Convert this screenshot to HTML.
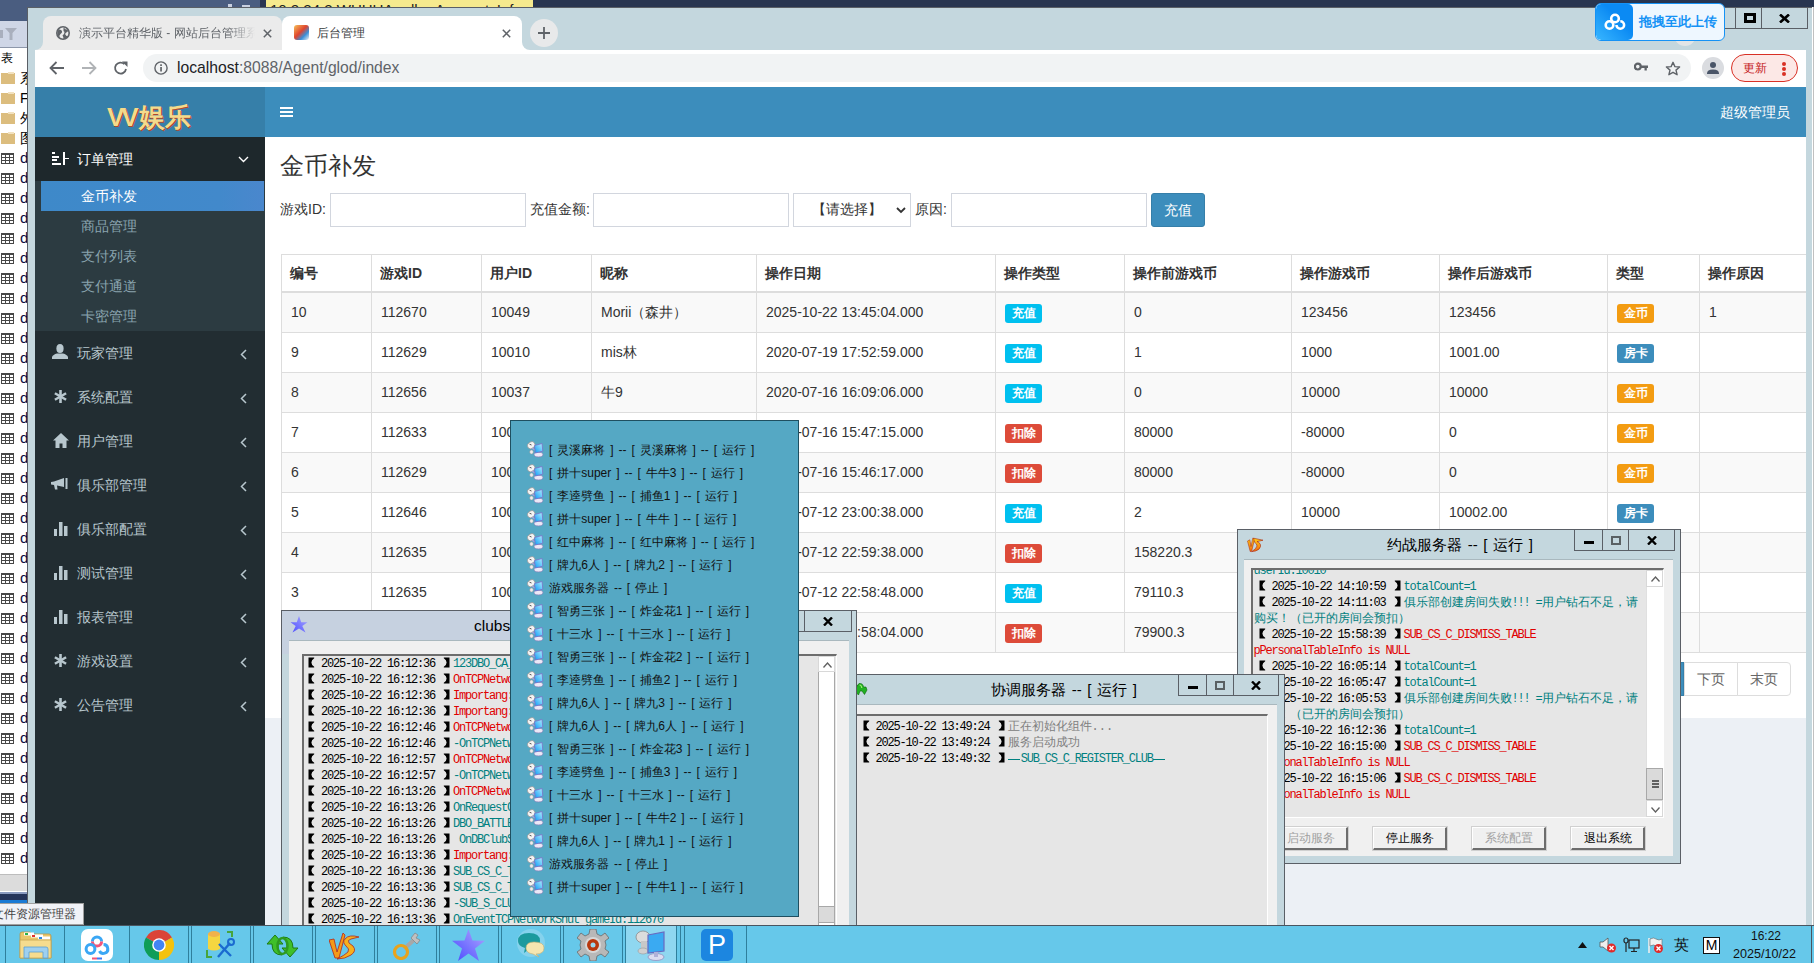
<!DOCTYPE html>
<html><head><meta charset="utf-8">
<style>
*{box-sizing:border-box;margin:0;padding:0}
html,body{width:1814px;height:963px;overflow:hidden;background:#283550;font-family:"Liberation Sans",sans-serif;font-size:14px;color:#333;position:relative}
.a{position:absolute}
.tbl{position:absolute;left:1px;top:4px;width:13px;height:12px;border:1px solid #4a4a4a;border-top-width:2px;background:
 linear-gradient(#4a4a4a,#4a4a4a) 3px 0/1px 100% no-repeat,
 linear-gradient(#4a4a4a,#4a4a4a) 7px 0/1px 100% no-repeat,
 linear-gradient(#4a4a4a,#4a4a4a) 0 2px/100% 1px no-repeat,
 linear-gradient(#4a4a4a,#4a4a4a) 0 5px/100% 1px no-repeat,#fff}
.fold{position:absolute;left:1px;top:5px;width:14px;height:11px;background:#dcb56a;border-radius:1px}
.el{position:absolute;left:20px;top:0px;font-size:15px;color:#000;line-height:20px}
.mi{position:absolute;left:35px;width:230px;height:44px;color:#b8c7ce;font-size:14px}
.mi .t{position:absolute;left:42px;top:12px;line-height:20px}
.mi .ic{position:absolute}
.mi .chev{position:absolute}
.sub{position:absolute;left:41px;width:223px;height:30px;color:#8aa4af;font-size:14px}
.sub .t{position:absolute;left:40px;top:5px;line-height:20px}
.lbl{font-size:14px;line-height:20px;color:#333}
.inp{height:34px;border:1px solid #d2d6de;background:#fff}
.th{font-size:14px;font-weight:bold;line-height:20px;color:#333;white-space:nowrap}
.td{font-size:14px;line-height:20px;color:#333;white-space:nowrap}
.lab{height:19px;width:37px;text-align:center;border-radius:3px;color:#fff;font-size:12px;font-weight:bold;line-height:19px;white-space:nowrap}
.pg{height:34px;border:1px solid #ddd;background:#fff;color:#666;font-size:14px;line-height:32px;text-align:center}
.tb{width:13px;height:11px;border:1px solid #474747;border-top-width:2px;background:linear-gradient(90deg,transparent 3px,#474747 3px,#474747 4px,transparent 4px,transparent 7px,#474747 7px,#474747 8px,transparent 8px),linear-gradient(transparent 2px,#474747 2px,#474747 3px,transparent 3px,transparent 5px,#474747 5px,#474747 6px,transparent 6px),#fff}

.win{box-shadow:inset 0 0 0 1px #5a5f66;background:#c4d7de;overflow:hidden}
.wt{font-size:15px;line-height:20px;color:#000;white-space:nowrap;word-spacing:1.5px}
.tbtn{border:1px solid #5a5f66;background:#c4d7de}
.panel{background:#f0f0f0;border-top:1px solid #a9b8be}
.logbox{background:#e6e6e6;border-top:2px solid #6d6d6d;border-left:2px solid #6d6d6d;border-right:1px solid #fff;border-bottom:1px solid #fff;overflow:hidden}
.ll{position:absolute;white-space:nowrap;font-family:"Liberation Mono",monospace;font-size:12px;line-height:16px;letter-spacing:-1.2px;color:#000}
.ll .bk{display:inline-block;vertical-align:top;fill:#000}
.ll .cj{letter-spacing:0}
.ll .c{color:#008080}
.ll .r{color:#e00000}
.ll .g{color:#808080}
.ll .emd{display:inline-block;width:12px;height:1px;background:#008080;vertical-align:top;margin-top:8px;margin-right:1.2px}
.sb{background:#fff;border-left:1px solid #e0e0e0}
.sbb{background:#fff;border:1px solid #d8d8d8}
.sbt{background:#dadada;border:1px solid #a8a8a8}
.wbtn{width:74px;height:23px;background:#f0f0f0;border-top:1px solid #fff;border-left:1px solid #fff;border-right:2px solid #6d6d6d;border-bottom:2px solid #6d6d6d;font-size:12px;line-height:20px;text-align:center;color:#000;box-shadow:0 0 0 1px #d0d0d0}
.wbtn.dis{color:#a0a0a0}
.pi{position:absolute;height:20px;font-size:12px;line-height:18px;color:#111;word-spacing:1.6px}
</style></head><body>
<!-- desktop bits -->
<div class="a" style="left:0;top:0;width:260px;height:21px;background:#4a5d80"></div>
<div class="a" style="left:260px;top:0;width:6px;height:7px;background:#2a3550"></div>
<div class="a" style="left:266px;top:0;width:267px;height:7px;background:#f6ea8e;overflow:hidden"><div class="a" style="left:4px;top:1px;font-size:15px;line-height:18px;color:#222;white-space:nowrap">10.2.24.3 WUHUA - dbo.AccountsInfo</div></div>
<div class="a" style="left:228px;top:4px;width:4px;height:3px;background:#c8d0e0"></div><div class="a" style="left:242px;top:5px;width:8px;height:2px;background:#c8d0e0"></div>
<div class="a" id="exp" style="left:0;top:21px;width:27px;height:882px;background:#fff;overflow:hidden">
  <div class="a" style="left:0;top:0;width:27px;height:27px;background:#cfd6e6;border-bottom:1px solid #8d97aa"></div><div class="a" style="left:0;top:9px;width:3px;height:8px;background:#a9afbd"></div><svg class="a" style="left:5px;top:7px" width="12" height="13" viewBox="0 0 12 13"><path d="M0 0 H12 L7.5 5 V12 H4.5 V5Z" fill="#a9afbd"/></svg>
</div>

<div class="a" style="left:1px;top:50px;font-size:12px;line-height:16px;color:#000">表</div>
<div class="a" style="left:1px;top:73px;width:14px;height:11px;background:#dcbd7e"></div><div class="a" style="left:8px;top:72px;width:6px;height:2px;background:#f2e2c0"></div><div class="a" style="left:20px;top:70px;font-size:14px;line-height:16px;color:#000">系</div>
<div class="a" style="left:1px;top:93px;width:14px;height:11px;background:#dcbd7e"></div><div class="a" style="left:8px;top:92px;width:6px;height:2px;background:#f2e2c0"></div><div class="a" style="left:20px;top:90px;font-size:14px;line-height:16px;color:#000">F</div>
<div class="a" style="left:1px;top:113px;width:14px;height:11px;background:#dcbd7e"></div><div class="a" style="left:8px;top:112px;width:6px;height:2px;background:#f2e2c0"></div><div class="a" style="left:20px;top:110px;font-size:14px;line-height:16px;color:#000">外</div>
<div class="a" style="left:1px;top:133px;width:14px;height:11px;background:#dcbd7e"></div><div class="a" style="left:8px;top:132px;width:6px;height:2px;background:#f2e2c0"></div><div class="a" style="left:20px;top:130px;font-size:14px;line-height:16px;color:#000">图</div>
<div class="a tb" style="left:1px;top:153px"></div><div class="a" style="left:20px;top:149px;font-size:15px;line-height:18px;color:#0a0a40">d</div>
<div class="a tb" style="left:1px;top:173px"></div><div class="a" style="left:20px;top:169px;font-size:15px;line-height:18px;color:#0a0a40">d</div>
<div class="a tb" style="left:1px;top:193px"></div><div class="a" style="left:20px;top:189px;font-size:15px;line-height:18px;color:#0a0a40">d</div>
<div class="a tb" style="left:1px;top:213px"></div><div class="a" style="left:20px;top:209px;font-size:15px;line-height:18px;color:#0a0a40">d</div>
<div class="a tb" style="left:1px;top:233px"></div><div class="a" style="left:20px;top:229px;font-size:15px;line-height:18px;color:#0a0a40">d</div>
<div class="a tb" style="left:1px;top:253px"></div><div class="a" style="left:20px;top:249px;font-size:15px;line-height:18px;color:#0a0a40">d</div>
<div class="a tb" style="left:1px;top:273px"></div><div class="a" style="left:20px;top:269px;font-size:15px;line-height:18px;color:#0a0a40">d</div>
<div class="a tb" style="left:1px;top:293px"></div><div class="a" style="left:20px;top:289px;font-size:15px;line-height:18px;color:#0a0a40">d</div>
<div class="a tb" style="left:1px;top:313px"></div><div class="a" style="left:20px;top:309px;font-size:15px;line-height:18px;color:#0a0a40">d</div>
<div class="a tb" style="left:1px;top:333px"></div><div class="a" style="left:20px;top:329px;font-size:15px;line-height:18px;color:#0a0a40">d</div>
<div class="a tb" style="left:1px;top:353px"></div><div class="a" style="left:20px;top:349px;font-size:15px;line-height:18px;color:#0a0a40">d</div>
<div class="a tb" style="left:1px;top:373px"></div><div class="a" style="left:20px;top:369px;font-size:15px;line-height:18px;color:#0a0a40">d</div>
<div class="a tb" style="left:1px;top:393px"></div><div class="a" style="left:20px;top:389px;font-size:15px;line-height:18px;color:#0a0a40">d</div>
<div class="a tb" style="left:1px;top:413px"></div><div class="a" style="left:20px;top:409px;font-size:15px;line-height:18px;color:#0a0a40">d</div>
<div class="a tb" style="left:1px;top:433px"></div><div class="a" style="left:20px;top:429px;font-size:15px;line-height:18px;color:#0a0a40">d</div>
<div class="a tb" style="left:1px;top:453px"></div><div class="a" style="left:20px;top:449px;font-size:15px;line-height:18px;color:#0a0a40">d</div>
<div class="a tb" style="left:1px;top:473px"></div><div class="a" style="left:20px;top:469px;font-size:15px;line-height:18px;color:#0a0a40">d</div>
<div class="a tb" style="left:1px;top:493px"></div><div class="a" style="left:20px;top:489px;font-size:15px;line-height:18px;color:#0a0a40">d</div>
<div class="a tb" style="left:1px;top:513px"></div><div class="a" style="left:20px;top:509px;font-size:15px;line-height:18px;color:#0a0a40">d</div>
<div class="a tb" style="left:1px;top:533px"></div><div class="a" style="left:20px;top:529px;font-size:15px;line-height:18px;color:#0a0a40">d</div>
<div class="a tb" style="left:1px;top:553px"></div><div class="a" style="left:20px;top:549px;font-size:15px;line-height:18px;color:#0a0a40">d</div>
<div class="a tb" style="left:1px;top:573px"></div><div class="a" style="left:20px;top:569px;font-size:15px;line-height:18px;color:#0a0a40">d</div>
<div class="a tb" style="left:1px;top:593px"></div><div class="a" style="left:20px;top:589px;font-size:15px;line-height:18px;color:#0a0a40">d</div>
<div class="a tb" style="left:1px;top:613px"></div><div class="a" style="left:20px;top:609px;font-size:15px;line-height:18px;color:#0a0a40">d</div>
<div class="a tb" style="left:1px;top:633px"></div><div class="a" style="left:20px;top:629px;font-size:15px;line-height:18px;color:#0a0a40">d</div>
<div class="a tb" style="left:1px;top:653px"></div><div class="a" style="left:20px;top:649px;font-size:15px;line-height:18px;color:#0a0a40">d</div>
<div class="a tb" style="left:1px;top:673px"></div><div class="a" style="left:20px;top:669px;font-size:15px;line-height:18px;color:#0a0a40">d</div>
<div class="a tb" style="left:1px;top:693px"></div><div class="a" style="left:20px;top:689px;font-size:15px;line-height:18px;color:#0a0a40">d</div>
<div class="a tb" style="left:1px;top:713px"></div><div class="a" style="left:20px;top:709px;font-size:15px;line-height:18px;color:#0a0a40">d</div>
<div class="a tb" style="left:1px;top:733px"></div><div class="a" style="left:20px;top:729px;font-size:15px;line-height:18px;color:#0a0a40">d</div>
<div class="a tb" style="left:1px;top:753px"></div><div class="a" style="left:20px;top:749px;font-size:15px;line-height:18px;color:#0a0a40">d</div>
<div class="a tb" style="left:1px;top:773px"></div><div class="a" style="left:20px;top:769px;font-size:15px;line-height:18px;color:#0a0a40">d</div>
<div class="a tb" style="left:1px;top:793px"></div><div class="a" style="left:20px;top:789px;font-size:15px;line-height:18px;color:#0a0a40">d</div>
<div class="a tb" style="left:1px;top:813px"></div><div class="a" style="left:20px;top:809px;font-size:15px;line-height:18px;color:#0a0a40">d</div>
<div class="a tb" style="left:1px;top:833px"></div><div class="a" style="left:20px;top:829px;font-size:15px;line-height:18px;color:#0a0a40">d</div>
<div class="a tb" style="left:1px;top:853px"></div><div class="a" style="left:20px;top:849px;font-size:15px;line-height:18px;color:#0a0a40">d</div>
<div class="a" style="left:0;top:874px;width:27px;height:17px;background:#dcdcdc;border-top:1px solid #bdbdbd"></div>
<div class="a" style="left:0;top:892px;width:27px;height:2px;background:#8a9bc0"></div>
<div class="a" style="left:0;top:894px;width:27px;height:6px;background:#25355a"></div>
<div class="a" style="left:0;top:900px;width:27px;height:3px;background:#1a7ad4"></div>

<!-- browser frame -->
<div class="a" style="left:27px;top:7px;width:1785px;height:918px;background:#c4d7de;border-left:1px solid #5a5f66;border-top:1px solid #5a5f66"></div><div class="a" style="left:1812px;top:7px;width:1px;height:918px;background:#fff"></div><div class="a" style="left:1813px;top:7px;width:1px;height:918px;background:#c0c0c0"></div>
<div class="a" style="left:35px;top:42px;width:8px;height:8px;background:#ebebeb"></div><div class="a" style="left:28px;top:34px;width:15px;height:16px;background:#c4d7de;border-bottom-right-radius:8px"></div>
<div class="a" style="left:43px;top:16px;width:239px;height:34px;background:#ebebeb;border-radius:8px 8px 0 0"></div>
<div class="a" style="left:282px;top:16px;width:240px;height:36px;background:#fff;border-radius:8px 8px 0 0"></div>
<div class="a" style="left:522px;top:42px;width:8px;height:8px;background:#fff"></div><div class="a" style="left:522px;top:34px;width:16px;height:16px;background:#c4d7de;border-bottom-left-radius:8px"></div>
<div class="a" style="left:35px;top:50px;width:1771px;height:37px;background:#fff"></div>
<div class="a" style="left:143px;top:54px;width:1548px;height:28px;border-radius:14px;background:#f1f3f4"></div>


<!-- browser chrome details -->
<svg class="a" style="left:56px;top:26px" width="14" height="14" viewBox="0 0 14 14"><circle cx="7" cy="7" r="6.2" fill="none" stroke="#5f6368" stroke-width="1.6"/><path d="M2.5 3.5 Q5 3 6 5 Q6.5 7 4.5 8 Q3 9 3.5 11.5 L1.5 9 Q0.8 6 2.5 3.5Z M8 1.5 Q9 4 11 3.5 L12.5 5 Q10.5 6 9 8 Q10 10 12 10.5 Q10 13 7.5 13 Q7.5 10.5 6.5 9.5 Q8.5 8 8.5 6 Q7 5 7.5 2Z" fill="#5f6368"/></svg>
<div class="a" style="left:79px;top:25px;width:176px;height:18px;overflow:hidden;white-space:nowrap;font-size:12px;line-height:16px;color:#5f6368;-webkit-mask-image:linear-gradient(90deg,#000 85%,transparent)">演示平台精华版 - 网站后台管理系统</div>
<svg class="a" style="left:263px;top:29px" width="9" height="9" viewBox="0 0 9 9"><path d="M0.8 0.8 L8.2 8.2 M8.2 0.8 L0.8 8.2" stroke="#5f6368" stroke-width="1.5"/></svg>
<div class="a" style="left:294px;top:25px;width:15px;height:15px;border-radius:3px;background:linear-gradient(135deg,#f6c35a,#e0442e 45%,#3a8fd8 70%,#f2f2f2)"></div>
<div class="a" style="left:317px;top:25px;font-size:12px;line-height:16px;color:#3c4043">后台管理</div>
<svg class="a" style="left:502px;top:29px" width="9" height="9" viewBox="0 0 9 9"><path d="M0.8 0.8 L8.2 8.2 M8.2 0.8 L0.8 8.2" stroke="#5f6368" stroke-width="1.5"/></svg>
<div class="a" style="left:530px;top:19px;width:28px;height:28px;border-radius:50%;background:#e8e9ea"></div>
<svg class="a" style="left:538px;top:27px" width="12" height="12" viewBox="0 0 12 12"><path d="M6 0 V12 M0 6 H12" stroke="#5f6368" stroke-width="1.8"/></svg>
<svg class="a" style="left:49px;top:61px" width="15" height="14" viewBox="0 0 15 14"><path d="M15 7 H2 M7.5 1 L1.5 7 L7.5 13" stroke="#5f6368" stroke-width="1.8" fill="none"/></svg>
<svg class="a" style="left:82px;top:61px" width="15" height="14" viewBox="0 0 15 14"><path d="M0 7 H13 M7.5 1 L13.5 7 L7.5 13" stroke="#b0b3b6" stroke-width="1.8" fill="none"/></svg>
<svg class="a" style="left:113px;top:60px" width="16" height="16" viewBox="0 0 16 16"><path d="M13 9 A5.5 5.5 0 1 1 11.4 4.1" stroke="#5f6368" stroke-width="1.8" fill="none"/><path d="M9 1.5 L14.5 1.5 L14.5 7 Z" fill="#5f6368"/></svg>
<svg class="a" style="left:154px;top:61px" width="14" height="14" viewBox="0 0 14 14"><circle cx="7" cy="7" r="6.1" fill="none" stroke="#5f6368" stroke-width="1.4"/><rect x="6.2" y="6" width="1.7" height="4.5" fill="#5f6368"/><rect x="6.2" y="3.3" width="1.7" height="1.7" fill="#5f6368"/></svg>
<div class="a" style="left:177px;top:58px;font-size:15.7px;line-height:20px;color:#5f6368;white-space:nowrap"><span style="color:#202124">localhost</span>:8088/Agent/glod/index</div>
<svg class="a" style="left:1634px;top:62px" width="14" height="10" viewBox="0 0 14 10"><circle cx="3.8" cy="4.6" r="2.9" fill="none" stroke="#5f6368" stroke-width="2.2"/><path d="M6.5 3.4 H14 V6 H12.8 V8.5 H10.5 V6 H6.5 Z" fill="#5f6368"/></svg>
<svg class="a" style="left:1665px;top:61px" width="16" height="15" viewBox="0 0 16 15"><path d="M8 1.3 L9.9 5.6 L14.6 6 L11 9.1 L12.1 13.7 L8 11.3 L3.9 13.7 L5 9.1 L1.4 6 L6.1 5.6 Z" fill="none" stroke="#5f6368" stroke-width="1.4" stroke-linejoin="round"/></svg>
<div class="a" style="left:1702px;top:57px;width:22px;height:22px;border-radius:50%;background:#dadce0"></div>
<svg class="a" style="left:1706px;top:61px" width="14" height="14" viewBox="0 0 14 14"><circle cx="7" cy="4" r="3" fill="#4a5568"/><path d="M1 12.5 Q1 8.5 7 8.5 Q13 8.5 13 12.5 V13 H1Z" fill="#4a5568"/></svg>
<div class="a" style="left:1731px;top:54px;width:67px;height:28px;border-radius:14px;border:1px solid #d93025;background:#fce8e6"></div>
<div class="a" style="left:1743px;top:60px;font-size:12px;line-height:16px;color:#c5221f">更新</div>
<div class="a" style="left:1782px;top:62px;width:4px;height:4px;border-radius:50%;background:#d93025"></div>
<div class="a" style="left:1782px;top:66px;width:4px;height:4px;border-radius:50%;background:#d93025;top:67px"></div>
<div class="a" style="left:1782px;top:72px;width:4px;height:4px;border-radius:50%;background:#d93025"></div>

<!-- page -->
<div class="a" style="left:35px;top:87px;width:1771px;height:838px;background:#ecf0f5"></div>
<div class="a" style="left:35px;top:87px;width:230px;height:50px;background:#367fa9"></div>
<div class="a" style="left:265px;top:87px;width:1541px;height:50px;background:#3c8dbc"></div>
<div class="a" style="left:35px;top:137px;width:230px;height:788px;background:#222d32"></div>
<div class="a" style="left:265px;top:137px;width:1541px;height:581px;background:#fff"></div>


<!-- logo + header -->
<div class="a" style="left:107px;top:101px;font-size:26px;font-weight:bold;color:#f4da8c;text-shadow:1px 1px 0 #b0482c;line-height:32px;white-space:nowrap"><span style="letter-spacing:-3px">VV</span><span style="margin-left:3px">娱乐</span></div>
<div class="a" style="left:280px;top:107px;width:13px;height:2px;background:#fff"></div>
<div class="a" style="left:280px;top:111px;width:13px;height:2px;background:#fff"></div>
<div class="a" style="left:280px;top:115px;width:13px;height:2px;background:#fff"></div>
<div class="a" style="left:1720px;top:102px;color:#fff;font-size:14px;line-height:20px">超级管理员</div>

<!-- sidebar -->
<div class="a" style="left:35px;top:137px;width:230px;height:44px;background:#1e282c"></div>
<div class="a" style="left:35px;top:181px;width:230px;height:150px;background:#2c3b41"></div>
<div class="a" style="left:41px;top:181px;width:223px;height:30px;background:linear-gradient(90deg,#3e89c9,#4289cb 80%,#4a87cd)"></div>
<div class="mi" style="top:137px;color:#fff"><svg class="ic" style="left:17px;top:15px" width="17" height="13" viewBox="0 0 17 13"><rect x="0" y="0" width="3" height="2" fill="#fff"/><rect x="0" y="4" width="7" height="2" fill="#fff"/><rect x="0" y="7" width="5" height="2" fill="#fff"/><rect x="0" y="11" width="9" height="2" fill="#fff"/><rect x="11" y="0" width="2" height="13" fill="#fff"/><rect x="13" y="6" width="4" height="1" fill="#fff"/></svg><span class="t">订单管理</span>
<svg class="chev" style="left:203px;top:19px" width="11" height="7" viewBox="0 0 11 7"><path d="M1 1 L5.5 5.5 L10 1" stroke="#fff" stroke-width="1.4" fill="none"/></svg></div>
<div class="sub" style="top:181px;color:#fff"><span class="t">金币补发</span></div>
<div class="sub" style="top:211px"><span class="t">商品管理</span></div>
<div class="sub" style="top:241px"><span class="t">支付列表</span></div>
<div class="sub" style="top:271px"><span class="t">支付通道</span></div>
<div class="sub" style="top:301px"><span class="t">卡密管理</span></div>
<div class="mi" style="top:331px"><svg class="ic" style="left:17px;top:13px" width="16" height="15" viewBox="0 0 16 15"><ellipse cx="8" cy="4.5" rx="3.6" ry="4.5" fill="#b8c7ce"/><path d="M0 15 L0 13 Q1 10.5 5 9.5 L11 9.5 Q15 10.5 16 13 L16 15 Z" fill="#b8c7ce"/></svg><span class="t">玩家管理</span><svg class="chev" style="left:205px;top:18px" width="7" height="11" viewBox="0 0 7 11"><path d="M6 1 L1.5 5.5 L6 10" stroke="#b8c7ce" stroke-width="1.5" fill="none"/></svg></div>
<div class="mi" style="top:375px"><svg class="ic" style="left:19px;top:15px" width="13" height="13" viewBox="0 0 13 13"><g stroke="#b8c7ce" stroke-width="2.6"><path d="M6.5 0 V13"/><path d="M0.9 3.25 L12.1 9.75"/><path d="M0.9 9.75 L12.1 3.25"/></g></svg><span class="t">系统配置</span><svg class="chev" style="left:205px;top:18px" width="7" height="11" viewBox="0 0 7 11"><path d="M6 1 L1.5 5.5 L6 10" stroke="#b8c7ce" stroke-width="1.5" fill="none"/></svg></div>
<div class="mi" style="top:419px"><svg class="ic" style="left:18px;top:14px" width="16" height="15" viewBox="0 0 16 15"><path d="M8 0 L16 7.5 L13.5 7.5 L13.5 15 L9.5 15 L9.5 10.5 L6.5 10.5 L6.5 15 L2.5 15 L2.5 7.5 L0 7.5 Z" fill="#b8c7ce"/></svg><span class="t">用户管理</span><svg class="chev" style="left:205px;top:18px" width="7" height="11" viewBox="0 0 7 11"><path d="M6 1 L1.5 5.5 L6 10" stroke="#b8c7ce" stroke-width="1.5" fill="none"/></svg></div>
<div class="mi" style="top:463px"><svg class="ic" style="left:16px;top:15px" width="17" height="12" viewBox="0 0 17 12"><path d="M0 4 L3 3.5 L13 0 L13 9 L6 7.5 L6.5 11.5 L4 11.5 L3 7 L0 6.5 Z" fill="#b8c7ce"/><rect x="14.5" y="0" width="2" height="11" fill="#b8c7ce"/></svg><span class="t">俱乐部管理</span><svg class="chev" style="left:205px;top:18px" width="7" height="11" viewBox="0 0 7 11"><path d="M6 1 L1.5 5.5 L6 10" stroke="#b8c7ce" stroke-width="1.5" fill="none"/></svg></div>
<div class="mi" style="top:507px"><svg class="ic" style="left:19px;top:15px" width="14" height="14" viewBox="0 0 14 14"><rect x="0" y="7" width="3" height="7" fill="#b8c7ce"/><rect x="5" y="0" width="3.5" height="14" fill="#b8c7ce"/><rect x="10" y="4" width="3.5" height="10" fill="#b8c7ce"/></svg><span class="t">俱乐部配置</span><svg class="chev" style="left:205px;top:18px" width="7" height="11" viewBox="0 0 7 11"><path d="M6 1 L1.5 5.5 L6 10" stroke="#b8c7ce" stroke-width="1.5" fill="none"/></svg></div>
<div class="mi" style="top:551px"><svg class="ic" style="left:19px;top:15px" width="14" height="14" viewBox="0 0 14 14"><rect x="0" y="7" width="3" height="7" fill="#b8c7ce"/><rect x="5" y="0" width="3.5" height="14" fill="#b8c7ce"/><rect x="10" y="4" width="3.5" height="10" fill="#b8c7ce"/></svg><span class="t">测试管理</span><svg class="chev" style="left:205px;top:18px" width="7" height="11" viewBox="0 0 7 11"><path d="M6 1 L1.5 5.5 L6 10" stroke="#b8c7ce" stroke-width="1.5" fill="none"/></svg></div>
<div class="mi" style="top:595px"><svg class="ic" style="left:19px;top:15px" width="14" height="14" viewBox="0 0 14 14"><rect x="0" y="7" width="3" height="7" fill="#b8c7ce"/><rect x="5" y="0" width="3.5" height="14" fill="#b8c7ce"/><rect x="10" y="4" width="3.5" height="10" fill="#b8c7ce"/></svg><span class="t">报表管理</span><svg class="chev" style="left:205px;top:18px" width="7" height="11" viewBox="0 0 7 11"><path d="M6 1 L1.5 5.5 L6 10" stroke="#b8c7ce" stroke-width="1.5" fill="none"/></svg></div>
<div class="mi" style="top:639px"><svg class="ic" style="left:19px;top:15px" width="13" height="13" viewBox="0 0 13 13"><g stroke="#b8c7ce" stroke-width="2.6"><path d="M6.5 0 V13"/><path d="M0.9 3.25 L12.1 9.75"/><path d="M0.9 9.75 L12.1 3.25"/></g></svg><span class="t">游戏设置</span><svg class="chev" style="left:205px;top:18px" width="7" height="11" viewBox="0 0 7 11"><path d="M6 1 L1.5 5.5 L6 10" stroke="#b8c7ce" stroke-width="1.5" fill="none"/></svg></div>
<div class="mi" style="top:683px"><svg class="ic" style="left:19px;top:15px" width="13" height="13" viewBox="0 0 13 13"><g stroke="#b8c7ce" stroke-width="2.6"><path d="M6.5 0 V13"/><path d="M0.9 3.25 L12.1 9.75"/><path d="M0.9 9.75 L12.1 3.25"/></g></svg><span class="t">公告管理</span><svg class="chev" style="left:205px;top:18px" width="7" height="11" viewBox="0 0 7 11"><path d="M6 1 L1.5 5.5 L6 10" stroke="#b8c7ce" stroke-width="1.5" fill="none"/></svg></div>

<!-- content -->
<div class="a" style="left:280px;top:151px;font-size:24px;line-height:30px;color:#333">金币补发</div>
<div class="a lbl" style="left:280px;top:199px">游戏ID:</div>
<div class="a inp" style="left:330px;top:193px;width:196px"></div>
<div class="a lbl" style="left:530px;top:199px">充值金额:</div>
<div class="a inp" style="left:593px;top:193px;width:196px"></div>
<div class="a inp" style="left:793px;top:193px;width:118px"></div>
<div class="a" style="left:812px;top:199px;font-size:14px;line-height:20px;color:#333">【请选择】</div>
<svg class="a" style="left:896px;top:207px" width="10" height="7" viewBox="0 0 10 7"><path d="M1 1 L5 5 L9 1" stroke="#333" stroke-width="1.8" fill="none"/></svg>
<div class="a lbl" style="left:915px;top:199px">原因:</div>
<div class="a inp" style="left:951px;top:193px;width:196px"></div>
<div class="a" style="left:1151px;top:193px;width:54px;height:34px;background:#3c8dbc;border:1px solid #367fa9;border-radius:3px;color:#fff;font-size:14px;line-height:32px;text-align:center">充值</div>
<div class="a" style="left:281px;top:292px;width:1525px;height:40px;background:#f9f9f9"></div>
<div class="a" style="left:281px;top:372px;width:1525px;height:40px;background:#f9f9f9"></div>
<div class="a" style="left:281px;top:452px;width:1525px;height:40px;background:#f9f9f9"></div>
<div class="a" style="left:281px;top:532px;width:1525px;height:40px;background:#f9f9f9"></div>
<div class="a" style="left:281px;top:612px;width:1525px;height:40px;background:#f9f9f9"></div>
<div class="a" style="left:281px;top:254px;width:1525px;height:1px;background:#ddd"></div>
<div class="a" style="left:281px;top:291px;width:1525px;height:2px;background:#ddd"></div>
<div class="a" style="left:281px;top:332px;width:1525px;height:1px;background:#ddd"></div>
<div class="a" style="left:281px;top:372px;width:1525px;height:1px;background:#ddd"></div>
<div class="a" style="left:281px;top:412px;width:1525px;height:1px;background:#ddd"></div>
<div class="a" style="left:281px;top:452px;width:1525px;height:1px;background:#ddd"></div>
<div class="a" style="left:281px;top:492px;width:1525px;height:1px;background:#ddd"></div>
<div class="a" style="left:281px;top:532px;width:1525px;height:1px;background:#ddd"></div>
<div class="a" style="left:281px;top:572px;width:1525px;height:1px;background:#ddd"></div>
<div class="a" style="left:281px;top:612px;width:1525px;height:1px;background:#ddd"></div>
<div class="a" style="left:281px;top:652px;width:1525px;height:1px;background:#ddd"></div>
<div class="a" style="left:281px;top:254px;width:1px;height:399px;background:#ddd"></div>
<div class="a" style="left:371px;top:254px;width:1px;height:399px;background:#ddd"></div>
<div class="a" style="left:481px;top:254px;width:1px;height:399px;background:#ddd"></div>
<div class="a" style="left:591px;top:254px;width:1px;height:399px;background:#ddd"></div>
<div class="a" style="left:756px;top:254px;width:1px;height:399px;background:#ddd"></div>
<div class="a" style="left:995px;top:254px;width:1px;height:399px;background:#ddd"></div>
<div class="a" style="left:1124px;top:254px;width:1px;height:399px;background:#ddd"></div>
<div class="a" style="left:1291px;top:254px;width:1px;height:399px;background:#ddd"></div>
<div class="a" style="left:1439px;top:254px;width:1px;height:399px;background:#ddd"></div>
<div class="a" style="left:1607px;top:254px;width:1px;height:399px;background:#ddd"></div>
<div class="a" style="left:1699px;top:254px;width:1px;height:399px;background:#ddd"></div>
<div class="a th" style="margin-left:1px;left:289px;top:263px">编号</div>
<div class="a th" style="margin-left:1px;left:379px;top:263px">游戏ID</div>
<div class="a th" style="margin-left:1px;left:489px;top:263px">用户ID</div>
<div class="a th" style="margin-left:1px;left:599px;top:263px">昵称</div>
<div class="a th" style="margin-left:1px;left:764px;top:263px">操作日期</div>
<div class="a th" style="margin-left:1px;left:1003px;top:263px">操作类型</div>
<div class="a th" style="margin-left:1px;left:1132px;top:263px">操作前游戏币</div>
<div class="a th" style="margin-left:1px;left:1299px;top:263px">操作游戏币</div>
<div class="a th" style="margin-left:1px;left:1447px;top:263px">操作后游戏币</div>
<div class="a th" style="margin-left:1px;left:1615px;top:263px">类型</div>
<div class="a th" style="margin-left:1px;left:1707px;top:263px">操作原因</div>
<div class="a td" style="margin-left:1px;left:290px;top:302px">10</div>
<div class="a td" style="margin-left:1px;left:380px;top:302px">112670</div>
<div class="a td" style="margin-left:1px;left:490px;top:302px">10049</div>
<div class="a td" style="margin-left:1px;left:600px;top:302px">Morii（森井）</div>
<div class="a td" style="margin-left:1px;left:765px;top:302px">2025-10-22 13:45:04.000</div>
<div class="a lab" style="left:1005px;top:304px;background:#00c0ef">充值</div>
<div class="a td" style="margin-left:1px;left:1133px;top:302px">0</div>
<div class="a td" style="margin-left:1px;left:1300px;top:302px">123456</div>
<div class="a td" style="margin-left:1px;left:1448px;top:302px">123456</div>
<div class="a lab" style="left:1617px;top:304px;background:#f39c12">金币</div>
<div class="a td" style="margin-left:1px;left:1708px;top:302px">1</div>
<div class="a td" style="margin-left:1px;left:290px;top:342px">9</div>
<div class="a td" style="margin-left:1px;left:380px;top:342px">112629</div>
<div class="a td" style="margin-left:1px;left:490px;top:342px">10010</div>
<div class="a td" style="margin-left:1px;left:600px;top:342px">mis林</div>
<div class="a td" style="margin-left:1px;left:765px;top:342px">2020-07-19 17:52:59.000</div>
<div class="a lab" style="left:1005px;top:344px;background:#00c0ef">充值</div>
<div class="a td" style="margin-left:1px;left:1133px;top:342px">1</div>
<div class="a td" style="margin-left:1px;left:1300px;top:342px">1000</div>
<div class="a td" style="margin-left:1px;left:1448px;top:342px">1001.00</div>
<div class="a lab" style="left:1617px;top:344px;background:#3c8dbc">房卡</div>
<div class="a td" style="margin-left:1px;left:290px;top:382px">8</div>
<div class="a td" style="margin-left:1px;left:380px;top:382px">112656</div>
<div class="a td" style="margin-left:1px;left:490px;top:382px">10037</div>
<div class="a td" style="margin-left:1px;left:600px;top:382px">牛9</div>
<div class="a td" style="margin-left:1px;left:765px;top:382px">2020-07-16 16:09:06.000</div>
<div class="a lab" style="left:1005px;top:384px;background:#00c0ef">充值</div>
<div class="a td" style="margin-left:1px;left:1133px;top:382px">0</div>
<div class="a td" style="margin-left:1px;left:1300px;top:382px">10000</div>
<div class="a td" style="margin-left:1px;left:1448px;top:382px">10000</div>
<div class="a lab" style="left:1617px;top:384px;background:#f39c12">金币</div>
<div class="a td" style="margin-left:1px;left:290px;top:422px">7</div>
<div class="a td" style="margin-left:1px;left:380px;top:422px">112633</div>
<div class="a td" style="margin-left:1px;left:490px;top:422px">10014</div>
<div class="a td" style="margin-left:1px;left:600px;top:422px">mis林</div>
<div class="a td" style="margin-left:1px;left:765px;top:422px">2020-07-16 15:47:15.000</div>
<div class="a lab" style="left:1005px;top:424px;background:#dd4b39">扣除</div>
<div class="a td" style="margin-left:1px;left:1133px;top:422px">80000</div>
<div class="a td" style="margin-left:1px;left:1300px;top:422px">-80000</div>
<div class="a td" style="margin-left:1px;left:1448px;top:422px">0</div>
<div class="a lab" style="left:1617px;top:424px;background:#f39c12">金币</div>
<div class="a td" style="margin-left:1px;left:290px;top:462px">6</div>
<div class="a td" style="margin-left:1px;left:380px;top:462px">112629</div>
<div class="a td" style="margin-left:1px;left:490px;top:462px">10010</div>
<div class="a td" style="margin-left:1px;left:600px;top:462px">mis林</div>
<div class="a td" style="margin-left:1px;left:765px;top:462px">2020-07-16 15:46:17.000</div>
<div class="a lab" style="left:1005px;top:464px;background:#dd4b39">扣除</div>
<div class="a td" style="margin-left:1px;left:1133px;top:462px">80000</div>
<div class="a td" style="margin-left:1px;left:1300px;top:462px">-80000</div>
<div class="a td" style="margin-left:1px;left:1448px;top:462px">0</div>
<div class="a lab" style="left:1617px;top:464px;background:#f39c12">金币</div>
<div class="a td" style="margin-left:1px;left:290px;top:502px">5</div>
<div class="a td" style="margin-left:1px;left:380px;top:502px">112646</div>
<div class="a td" style="margin-left:1px;left:490px;top:502px">10027</div>
<div class="a td" style="margin-left:1px;left:600px;top:502px">牛6</div>
<div class="a td" style="margin-left:1px;left:765px;top:502px">2020-07-12 23:00:38.000</div>
<div class="a lab" style="left:1005px;top:504px;background:#00c0ef">充值</div>
<div class="a td" style="margin-left:1px;left:1133px;top:502px">2</div>
<div class="a td" style="margin-left:1px;left:1300px;top:502px">10000</div>
<div class="a td" style="margin-left:1px;left:1448px;top:502px">10002.00</div>
<div class="a lab" style="left:1617px;top:504px;background:#3c8dbc">房卡</div>
<div class="a td" style="margin-left:1px;left:290px;top:542px">4</div>
<div class="a td" style="margin-left:1px;left:380px;top:542px">112635</div>
<div class="a td" style="margin-left:1px;left:490px;top:542px">10016</div>
<div class="a td" style="margin-left:1px;left:600px;top:542px">牛5</div>
<div class="a td" style="margin-left:1px;left:765px;top:542px">2020-07-12 22:59:38.000</div>
<div class="a lab" style="left:1005px;top:544px;background:#dd4b39">扣除</div>
<div class="a td" style="margin-left:1px;left:1133px;top:542px">158220.3</div>
<div class="a td" style="margin-left:1px;left:1300px;top:542px">-158220.3</div>
<div class="a td" style="margin-left:1px;left:1448px;top:542px">0</div>
<div class="a lab" style="left:1617px;top:544px;background:#f39c12">金币</div>
<div class="a td" style="margin-left:1px;left:290px;top:582px">3</div>
<div class="a td" style="margin-left:1px;left:380px;top:582px">112635</div>
<div class="a td" style="margin-left:1px;left:490px;top:582px">10016</div>
<div class="a td" style="margin-left:1px;left:600px;top:582px">牛5</div>
<div class="a td" style="margin-left:1px;left:765px;top:582px">2020-07-12 22:58:48.000</div>
<div class="a lab" style="left:1005px;top:584px;background:#00c0ef">充值</div>
<div class="a td" style="margin-left:1px;left:1133px;top:582px">79110.3</div>
<div class="a td" style="margin-left:1px;left:1300px;top:582px">79110.3</div>
<div class="a td" style="margin-left:1px;left:1448px;top:582px">158220.6</div>
<div class="a lab" style="left:1617px;top:584px;background:#f39c12">金币</div>
<div class="a td" style="margin-left:1px;left:290px;top:622px">2</div>
<div class="a td" style="margin-left:1px;left:380px;top:622px">112635</div>
<div class="a td" style="margin-left:1px;left:490px;top:622px">10016</div>
<div class="a td" style="margin-left:1px;left:600px;top:622px">牛5</div>
<div class="a td" style="margin-left:1px;left:765px;top:622px">2020-07-12 22:58:04.000</div>
<div class="a lab" style="left:1005px;top:624px;background:#dd4b39">扣除</div>
<div class="a td" style="margin-left:1px;left:1133px;top:622px">79900.3</div>
<div class="a td" style="margin-left:1px;left:1300px;top:622px">-790.0</div>
<div class="a td" style="margin-left:1px;left:1448px;top:622px">79110.3</div>
<div class="a lab" style="left:1617px;top:624px;background:#f39c12">金币</div>
<div class="a" style="left:1640px;top:662px;width:44px;height:34px;background:#3c8dbc;border:1px solid #367fa9"></div>
<div class="a pg" style="left:1684px;top:662px;width:54px">下页</div>
<div class="a pg" style="left:1737px;top:662px;width:54px;border-radius:0 4px 4px 0">末页</div>
<!-- WINDOWS START -->
<div class="a win" style="left:1237px;top:529px;width:444px;height:335px"><svg class="a" style="left:9px;top:8px" width="18" height="16" viewBox="0 0 18 16"><defs><linearGradient id="vsg" x1="0" y1="0" x2="0" y2="1"><stop offset="0" stop-color="#ffd21a"/><stop offset="1" stop-color="#f06a10"/></linearGradient></defs><path d="M1.5 4 L3.8 2.8 L5 9.5 L6.8 1 L8.6 2 L5.6 14.5 L4.2 14.5 Z" fill="url(#vsg)" stroke="#a8200c" stroke-width="0.5"/><path d="M7.5 1.2 L17 3.2 L11 4.6 Q15 6 14.5 9.5 Q14 12.5 9.5 14 L5.8 14.6 Q10.5 11.5 11 9 Q11.2 7 8.5 5.2 Z" fill="url(#vsg)" stroke="#a8200c" stroke-width="0.6"/></svg><div class="a wt" style="left:150px;top:6px">约战服务器 -- [ 运行 ]</div><div class="a tbtn" style="left:337px;top:0;width:29px;height:22px"><div class="a" style="left:9px;top:11px;width:10px;height:3px;background:#000"></div></div><div class="a tbtn" style="left:365px;top:0;width:27px;height:22px"><div class="a" style="left:8px;top:6px;width:10px;height:9px;border:2px solid #5a6063"></div></div><div class="a tbtn" style="left:391px;top:0;width:47px;height:22px"><svg class="a" style="left:18px;top:6px" width="10" height="9" viewBox="0 0 10 9"><path d="M1 0.5 L9 8.5 M9 0.5 L1 8.5" stroke="#000" stroke-width="2.4"/></svg></div><div class="a panel" style="left:7px;top:30px;width:429px;height:297px"></div><div class="a logbox" style="left:14px;top:39px;width:413px;height:250px"><div class="ll" style="top:-7px;left:0.5px"><span class="c">userId:10010</span></div>
<div class="ll" style="top:9px;left:0.5px"><svg class="bk" width="12" height="16" viewBox="0 0 12 16"><path d="M5.5 1.5 H11.2 V2.3 Q8.4 4 8.4 6.5 Q8.4 9 11.2 10.7 V11.5 H5.5Z"/></svg> 2025-10-22 14:10:59 <svg class="bk" width="12" height="16" viewBox="0 0 12 16"><path d="M8.5 1.5 H2.8 V2.3 Q5.6 4 5.6 6.5 Q5.6 9 2.8 10.7 V11.5 H8.5Z"/></svg><span class="c">totalCount=1</span></div>
<div class="ll" style="top:25px;left:0.5px"><svg class="bk" width="12" height="16" viewBox="0 0 12 16"><path d="M5.5 1.5 H11.2 V2.3 Q8.4 4 8.4 6.5 Q8.4 9 11.2 10.7 V11.5 H5.5Z"/></svg> 2025-10-22 14:11:03 <svg class="bk" width="12" height="16" viewBox="0 0 12 16"><path d="M8.5 1.5 H2.8 V2.3 Q5.6 4 5.6 6.5 Q5.6 9 2.8 10.7 V11.5 H8.5Z"/></svg><span class="c"><span class="cj">俱乐部创建房间失败</span>!!! =<span class="cj">用户钻石不足，请</span></span></div>
<div class="ll" style="top:41px;left:0.5px"><span class="c cj">购买！（已开的房间会预扣）</span></div>
<div class="ll" style="top:57px;left:0.5px"><svg class="bk" width="12" height="16" viewBox="0 0 12 16"><path d="M5.5 1.5 H11.2 V2.3 Q8.4 4 8.4 6.5 Q8.4 9 11.2 10.7 V11.5 H5.5Z"/></svg> 2025-10-22 15:58:39 <svg class="bk" width="12" height="16" viewBox="0 0 12 16"><path d="M8.5 1.5 H2.8 V2.3 Q5.6 4 5.6 6.5 Q5.6 9 2.8 10.7 V11.5 H8.5Z"/></svg><span class="r">SUB_CS_C_DISMISS_TABLE</span></div>
<div class="ll" style="top:73px;left:0.5px"><span class="r">pPersonalTableInfo is NULL</span></div>
<div class="ll" style="top:89px;left:0.5px"><svg class="bk" width="12" height="16" viewBox="0 0 12 16"><path d="M5.5 1.5 H11.2 V2.3 Q8.4 4 8.4 6.5 Q8.4 9 11.2 10.7 V11.5 H5.5Z"/></svg> 2025-10-22 16:05:14 <svg class="bk" width="12" height="16" viewBox="0 0 12 16"><path d="M8.5 1.5 H2.8 V2.3 Q5.6 4 5.6 6.5 Q5.6 9 2.8 10.7 V11.5 H8.5Z"/></svg><span class="c">totalCount=1</span></div>
<div class="ll" style="top:105px;left:0.5px"><svg class="bk" width="12" height="16" viewBox="0 0 12 16"><path d="M5.5 1.5 H11.2 V2.3 Q8.4 4 8.4 6.5 Q8.4 9 11.2 10.7 V11.5 H5.5Z"/></svg> 2025-10-22 16:05:47 <svg class="bk" width="12" height="16" viewBox="0 0 12 16"><path d="M8.5 1.5 H2.8 V2.3 Q5.6 4 5.6 6.5 Q5.6 9 2.8 10.7 V11.5 H8.5Z"/></svg><span class="c">totalCount=1</span></div>
<div class="ll" style="top:121px;left:0.5px"><svg class="bk" width="12" height="16" viewBox="0 0 12 16"><path d="M5.5 1.5 H11.2 V2.3 Q8.4 4 8.4 6.5 Q8.4 9 11.2 10.7 V11.5 H5.5Z"/></svg> 2025-10-22 16:05:53 <svg class="bk" width="12" height="16" viewBox="0 0 12 16"><path d="M8.5 1.5 H2.8 V2.3 Q5.6 4 5.6 6.5 Q5.6 9 2.8 10.7 V11.5 H8.5Z"/></svg><span class="c"><span class="cj">俱乐部创建房间失败</span>!!! =<span class="cj">用户钻石不足，请</span></span></div>
<div class="ll" style="top:137px;left:0.5px"><span class="c cj">购买！（已开的房间会预扣）</span></div>
<div class="ll" style="top:153px;left:0.5px"><svg class="bk" width="12" height="16" viewBox="0 0 12 16"><path d="M5.5 1.5 H11.2 V2.3 Q8.4 4 8.4 6.5 Q8.4 9 11.2 10.7 V11.5 H5.5Z"/></svg> 2025-10-22 16:12:36 <svg class="bk" width="12" height="16" viewBox="0 0 12 16"><path d="M8.5 1.5 H2.8 V2.3 Q5.6 4 5.6 6.5 Q5.6 9 2.8 10.7 V11.5 H8.5Z"/></svg><span class="c">totalCount=1</span></div>
<div class="ll" style="top:169px;left:0.5px"><svg class="bk" width="12" height="16" viewBox="0 0 12 16"><path d="M5.5 1.5 H11.2 V2.3 Q8.4 4 8.4 6.5 Q8.4 9 11.2 10.7 V11.5 H5.5Z"/></svg> 2025-10-22 16:15:00 <svg class="bk" width="12" height="16" viewBox="0 0 12 16"><path d="M8.5 1.5 H2.8 V2.3 Q5.6 4 5.6 6.5 Q5.6 9 2.8 10.7 V11.5 H8.5Z"/></svg><span class="r">SUB_CS_C_DISMISS_TABLE</span></div>
<div class="ll" style="top:185px;left:0.5px"><span class="r">pPersonalTableInfo is NULL</span></div>
<div class="ll" style="top:201px;left:0.5px"><svg class="bk" width="12" height="16" viewBox="0 0 12 16"><path d="M5.5 1.5 H11.2 V2.3 Q8.4 4 8.4 6.5 Q8.4 9 11.2 10.7 V11.5 H5.5Z"/></svg> 2025-10-22 16:15:06 <svg class="bk" width="12" height="16" viewBox="0 0 12 16"><path d="M8.5 1.5 H2.8 V2.3 Q5.6 4 5.6 6.5 Q5.6 9 2.8 10.7 V11.5 H8.5Z"/></svg><span class="r">SUB_CS_C_DISMISS_TABLE</span></div>
<div class="ll" style="top:217px;left:0.5px"><span class="r">pPersonalTableInfo is NULL</span></div>
<div class="a sb" style="left:393px;top:0px;width:17px;height:247px"></div><div class="a sbb" style="left:393px;top:0px;width:17px;height:17px"><svg class="a" style="left:4px;top:5px" width="9" height="6" viewBox="0 0 9 6"><path d="M0.5 5.5 L4.5 1 L8.5 5.5" stroke="#606060" stroke-width="1.3" fill="none"/></svg></div><div class="a sbt" style="left:393px;top:198px;width:17px;height:32px"><div class="a" style="left:5px;top:11px;width:7px;height:2px;background:#606060"></div><div class="a" style="left:5px;top:14px;width:7px;height:2px;background:#606060"></div><div class="a" style="left:5px;top:17px;width:7px;height:2px;background:#606060"></div></div><div class="a sbb" style="left:393px;top:230px;width:17px;height:17px"><svg class="a" style="left:4px;top:6px" width="9" height="6" viewBox="0 0 9 6"><path d="M0.5 0.5 L4.5 5 L8.5 0.5" stroke="#606060" stroke-width="1.3" fill="none"/></svg></div></div><div class="a wbtn dis" style="left:37px;top:298px">启动服务</div><div class="a wbtn" style="left:136px;top:298px">停止服务</div><div class="a wbtn dis" style="left:235px;top:298px">系统配置</div><div class="a wbtn" style="left:334px;top:298px">退出系统</div></div>
<div class="a win" style="left:830px;top:674px;width:455px;height:300px"><svg class="a" style="left:25px;top:9px" width="13" height="13" viewBox="0 0 13 13"><path d="M4 0.5 Q8 0 8.5 4 L11 4 L12 7 L9.5 11.5 L7 8 L5 8 L3.5 12 L0.5 9 Q0 4 4 0.5Z" fill="#22b022" stroke="#0a6a0a" stroke-width="0.6"/><path d="M4.5 2 Q6.5 2 6.8 5" stroke="#9af06a" stroke-width="1.2" fill="none"/></svg><div class="a wt" style="left:161px;top:6px">协调服务器 -- [ 运行 ]</div><div class="a tbtn" style="left:348px;top:0;width:29px;height:22px"><div class="a" style="left:9px;top:11px;width:10px;height:3px;background:#000"></div></div><div class="a tbtn" style="left:376px;top:0;width:28px;height:22px"><div class="a" style="left:8px;top:6px;width:10px;height:9px;border:2px solid #5a6063"></div></div><div class="a tbtn" style="left:403px;top:0;width:46px;height:22px"><svg class="a" style="left:17px;top:6px" width="10" height="9" viewBox="0 0 10 9"><path d="M1 0.5 L9 8.5 M9 0.5 L1 8.5" stroke="#000" stroke-width="2.4"/></svg></div><div class="a panel" style="left:7px;top:30px;width:440px;height:270px"></div><div class="a logbox" style="left:25px;top:40px;width:413px;height:260px"><div class="ll" style="top:3px;left:0.5px"><svg class="bk" width="12" height="16" viewBox="0 0 12 16"><path d="M5.5 1.5 H11.2 V2.3 Q8.4 4 8.4 6.5 Q8.4 9 11.2 10.7 V11.5 H5.5Z"/></svg> 2025-10-22 13:49:24 <svg class="bk" width="12" height="16" viewBox="0 0 12 16"><path d="M8.5 1.5 H2.8 V2.3 Q5.6 4 5.6 6.5 Q5.6 9 2.8 10.7 V11.5 H8.5Z"/></svg><span class="g cj">正在初始化组件...</span></div>
<div class="ll" style="top:19px;left:0.5px"><svg class="bk" width="12" height="16" viewBox="0 0 12 16"><path d="M5.5 1.5 H11.2 V2.3 Q8.4 4 8.4 6.5 Q8.4 9 11.2 10.7 V11.5 H5.5Z"/></svg> 2025-10-22 13:49:24 <svg class="bk" width="12" height="16" viewBox="0 0 12 16"><path d="M8.5 1.5 H2.8 V2.3 Q5.6 4 5.6 6.5 Q5.6 9 2.8 10.7 V11.5 H8.5Z"/></svg><span class="g cj">服务启动成功</span></div>
<div class="ll" style="top:35px;left:0.5px"><svg class="bk" width="12" height="16" viewBox="0 0 12 16"><path d="M5.5 1.5 H11.2 V2.3 Q8.4 4 8.4 6.5 Q8.4 9 11.2 10.7 V11.5 H5.5Z"/></svg> 2025-10-22 13:49:32 <svg class="bk" width="12" height="16" viewBox="0 0 12 16"><path d="M8.5 1.5 H2.8 V2.3 Q5.6 4 5.6 6.5 Q5.6 9 2.8 10.7 V11.5 H8.5Z"/></svg><span class="c"><span class="emd"></span>SUB_CS_C_REGISTER_CLUB<span class="emd"></span></span></div>
</div></div>
<div class="a win" style="left:281px;top:610px;width:576px;height:340px"><div class="a" style="left:1px;top:1px;width:240px;height:43px;background:#c6d1e0"></div><svg class="a" style="left:9px;top:6px" width="18" height="17" viewBox="0 0 18 17"><defs><linearGradient id="sg" x1="0" y1="1" x2="1" y2="0"><stop offset="0" stop-color="#4b4bff"/><stop offset="1" stop-color="#a9a9ff"/></linearGradient></defs><path d="M9 0 L11.2 6.2 L17.5 6.2 L12.3 10 L15.5 16.5 L9 12.5 L2.5 16.5 L5.7 10 L0.5 6.2 L6.8 6.2Z" fill="url(#sg)"/></svg><div class="a" style="left:193px;top:6px;font-size:15.5px;line-height:20px;color:#000">clubs服务器 -- [ 运行 ]</div><div class="a tbtn" style="left:446px;top:0;width:29px;height:22px"><div class="a" style="left:9px;top:11px;width:10px;height:3px;background:#000"></div></div><div class="a tbtn" style="left:474px;top:0;width:50px;height:22px"><div class="a" style="left:8px;top:6px;width:10px;height:9px;border:2px solid #5a6063"></div></div><div class="a tbtn" style="left:523px;top:0;width:48px;height:22px"><svg class="a" style="left:18px;top:6px" width="10" height="9" viewBox="0 0 10 9"><path d="M1 0.5 L9 8.5 M9 0.5 L1 8.5" stroke="#000" stroke-width="2.4"/></svg></div><div class="a panel" style="left:8px;top:30px;width:560px;height:310px"></div><div class="a logbox" style="left:21px;top:44px;width:535px;height:300px"><div class="ll" style="top:0px;left:-1px"><svg class="bk" width="12" height="16" viewBox="0 0 12 16"><path d="M5.5 1.5 H11.2 V2.3 Q8.4 4 8.4 6.5 Q8.4 9 11.2 10.7 V11.5 H5.5Z"/></svg> 2025-10-22 16:12:36 <svg class="bk" width="12" height="16" viewBox="0 0 12 16"><path d="M8.5 1.5 H2.8 V2.3 Q5.6 4 5.6 6.5 Q5.6 9 2.8 10.7 V11.5 H8.5Z"/></svg><span class="c">123DBO_CA_CLUB_ROOM_LIST_RESULT dwClubID(gameId)8</span></div>
<div class="ll" style="top:16px;left:-1px"><svg class="bk" width="12" height="16" viewBox="0 0 12 16"><path d="M5.5 1.5 H11.2 V2.3 Q8.4 4 8.4 6.5 Q8.4 9 11.2 10.7 V11.5 H5.5Z"/></svg> 2025-10-22 16:12:36 <svg class="bk" width="12" height="16" viewBox="0 0 12 16"><path d="M8.5 1.5 H2.8 V2.3 Q5.6 4 5.6 6.5 Q5.6 9 2.8 10.7 V11.5 H8.5Z"/></svg><span class="r">OnTCPNetworkMainPCGameServer: RegisterGameServer</span></div>
<div class="ll" style="top:32px;left:-1px"><svg class="bk" width="12" height="16" viewBox="0 0 12 16"><path d="M5.5 1.5 H11.2 V2.3 Q8.4 4 8.4 6.5 Q8.4 9 11.2 10.7 V11.5 H5.5Z"/></svg> 2025-10-22 16:12:36 <svg class="bk" width="12" height="16" viewBox="0 0 12 16"><path d="M8.5 1.5 H2.8 V2.3 Q5.6 4 5.6 6.5 Q5.6 9 2.8 10.7 V11.5 H8.5Z"/></svg><span class="r">Importang: ServerID=8 ClubID=112670</span></div>
<div class="ll" style="top:48px;left:-1px"><svg class="bk" width="12" height="16" viewBox="0 0 12 16"><path d="M5.5 1.5 H11.2 V2.3 Q8.4 4 8.4 6.5 Q8.4 9 11.2 10.7 V11.5 H5.5Z"/></svg> 2025-10-22 16:12:36 <svg class="bk" width="12" height="16" viewBox="0 0 12 16"><path d="M8.5 1.5 H2.8 V2.3 Q5.6 4 5.6 6.5 Q5.6 9 2.8 10.7 V11.5 H8.5Z"/></svg><span class="r">Importang: ServerID=9 ClubID=112670</span></div>
<div class="ll" style="top:64px;left:-1px"><svg class="bk" width="12" height="16" viewBox="0 0 12 16"><path d="M5.5 1.5 H11.2 V2.3 Q8.4 4 8.4 6.5 Q8.4 9 11.2 10.7 V11.5 H5.5Z"/></svg> 2025-10-22 16:12:46 <svg class="bk" width="12" height="16" viewBox="0 0 12 16"><path d="M8.5 1.5 H2.8 V2.3 Q5.6 4 5.6 6.5 Q5.6 9 2.8 10.7 V11.5 H8.5Z"/></svg><span class="r">OnTCPNetworkShut gameId:112670 ServerID=8</span></div>
<div class="ll" style="top:80px;left:-1px"><svg class="bk" width="12" height="16" viewBox="0 0 12 16"><path d="M5.5 1.5 H11.2 V2.3 Q8.4 4 8.4 6.5 Q8.4 9 11.2 10.7 V11.5 H5.5Z"/></svg> 2025-10-22 16:12:46 <svg class="bk" width="12" height="16" viewBox="0 0 12 16"><path d="M8.5 1.5 H2.8 V2.3 Q5.6 4 5.6 6.5 Q5.6 9 2.8 10.7 V11.5 H8.5Z"/></svg><span class="c">-OnTCPNetworkShut gameId:112670 ServerID=8</span></div>
<div class="ll" style="top:96px;left:-1px"><svg class="bk" width="12" height="16" viewBox="0 0 12 16"><path d="M5.5 1.5 H11.2 V2.3 Q8.4 4 8.4 6.5 Q8.4 9 11.2 10.7 V11.5 H5.5Z"/></svg> 2025-10-22 16:12:57 <svg class="bk" width="12" height="16" viewBox="0 0 12 16"><path d="M8.5 1.5 H2.8 V2.3 Q5.6 4 5.6 6.5 Q5.6 9 2.8 10.7 V11.5 H8.5Z"/></svg><span class="r">OnTCPNetworkShut gameId:112670 ServerID=9</span></div>
<div class="ll" style="top:112px;left:-1px"><svg class="bk" width="12" height="16" viewBox="0 0 12 16"><path d="M5.5 1.5 H11.2 V2.3 Q8.4 4 8.4 6.5 Q8.4 9 11.2 10.7 V11.5 H5.5Z"/></svg> 2025-10-22 16:12:57 <svg class="bk" width="12" height="16" viewBox="0 0 12 16"><path d="M8.5 1.5 H2.8 V2.3 Q5.6 4 5.6 6.5 Q5.6 9 2.8 10.7 V11.5 H8.5Z"/></svg><span class="c">-OnTCPNetworkShut gameId:112670 ServerID=9</span></div>
<div class="ll" style="top:128px;left:-1px"><svg class="bk" width="12" height="16" viewBox="0 0 12 16"><path d="M5.5 1.5 H11.2 V2.3 Q8.4 4 8.4 6.5 Q8.4 9 11.2 10.7 V11.5 H5.5Z"/></svg> 2025-10-22 16:13:26 <svg class="bk" width="12" height="16" viewBox="0 0 12 16"><path d="M8.5 1.5 H2.8 V2.3 Q5.6 4 5.6 6.5 Q5.6 9 2.8 10.7 V11.5 H8.5Z"/></svg><span class="r">OnTCPNetworkMainPCGameServer: Register</span></div>
<div class="ll" style="top:144px;left:-1px"><svg class="bk" width="12" height="16" viewBox="0 0 12 16"><path d="M5.5 1.5 H11.2 V2.3 Q8.4 4 8.4 6.5 Q8.4 9 11.2 10.7 V11.5 H5.5Z"/></svg> 2025-10-22 16:13:26 <svg class="bk" width="12" height="16" viewBox="0 0 12 16"><path d="M8.5 1.5 H2.8 V2.3 Q5.6 4 5.6 6.5 Q5.6 9 2.8 10.7 V11.5 H8.5Z"/></svg><span class="c">OnRequestClubRoomList gameId:112670</span></div>
<div class="ll" style="top:160px;left:-1px"><svg class="bk" width="12" height="16" viewBox="0 0 12 16"><path d="M5.5 1.5 H11.2 V2.3 Q8.4 4 8.4 6.5 Q8.4 9 11.2 10.7 V11.5 H5.5Z"/></svg> 2025-10-22 16:13:26 <svg class="bk" width="12" height="16" viewBox="0 0 12 16"><path d="M8.5 1.5 H2.8 V2.3 Q5.6 4 5.6 6.5 Q5.6 9 2.8 10.7 V11.5 H8.5Z"/></svg><span class="c">DBO_BATTLE_CLUB_ROOM_LIST gameId:112670</span></div>
<div class="ll" style="top:176px;left:-1px"><svg class="bk" width="12" height="16" viewBox="0 0 12 16"><path d="M5.5 1.5 H11.2 V2.3 Q8.4 4 8.4 6.5 Q8.4 9 11.2 10.7 V11.5 H5.5Z"/></svg> 2025-10-22 16:13:26 <svg class="bk" width="12" height="16" viewBox="0 0 12 16"><path d="M8.5 1.5 H2.8 V2.3 Q5.6 4 5.6 6.5 Q5.6 9 2.8 10.7 V11.5 H8.5Z"/></svg><span class="c"> OnDBClubServerList gameId:112670</span></div>
<div class="ll" style="top:192px;left:-1px"><svg class="bk" width="12" height="16" viewBox="0 0 12 16"><path d="M5.5 1.5 H11.2 V2.3 Q8.4 4 8.4 6.5 Q8.4 9 11.2 10.7 V11.5 H5.5Z"/></svg> 2025-10-22 16:13:36 <svg class="bk" width="12" height="16" viewBox="0 0 12 16"><path d="M8.5 1.5 H2.8 V2.3 Q5.6 4 5.6 6.5 Q5.6 9 2.8 10.7 V11.5 H8.5Z"/></svg><span class="r">Importang: ServerID=10 ClubID=112670</span></div>
<div class="ll" style="top:208px;left:-1px"><svg class="bk" width="12" height="16" viewBox="0 0 12 16"><path d="M5.5 1.5 H11.2 V2.3 Q8.4 4 8.4 6.5 Q8.4 9 11.2 10.7 V11.5 H5.5Z"/></svg> 2025-10-22 16:13:36 <svg class="bk" width="12" height="16" viewBox="0 0 12 16"><path d="M8.5 1.5 H2.8 V2.3 Q5.6 4 5.6 6.5 Q5.6 9 2.8 10.7 V11.5 H8.5Z"/></svg><span class="c">SUB_CS_C_TABLE_CHANGE gameId:112670</span></div>
<div class="ll" style="top:224px;left:-1px"><svg class="bk" width="12" height="16" viewBox="0 0 12 16"><path d="M5.5 1.5 H11.2 V2.3 Q8.4 4 8.4 6.5 Q8.4 9 11.2 10.7 V11.5 H5.5Z"/></svg> 2025-10-22 16:13:36 <svg class="bk" width="12" height="16" viewBox="0 0 12 16"><path d="M8.5 1.5 H2.8 V2.3 Q5.6 4 5.6 6.5 Q5.6 9 2.8 10.7 V11.5 H8.5Z"/></svg><span class="c">SUB_CS_C_TABLE_CHANGE gameId:112670</span></div>
<div class="ll" style="top:240px;left:-1px"><svg class="bk" width="12" height="16" viewBox="0 0 12 16"><path d="M5.5 1.5 H11.2 V2.3 Q8.4 4 8.4 6.5 Q8.4 9 11.2 10.7 V11.5 H5.5Z"/></svg> 2025-10-22 16:13:36 <svg class="bk" width="12" height="16" viewBox="0 0 12 16"><path d="M8.5 1.5 H2.8 V2.3 Q5.6 4 5.6 6.5 Q5.6 9 2.8 10.7 V11.5 H8.5Z"/></svg><span class="c">-SUB_S_CLUB_ROOM_LIST gameId:112670</span></div>
<div class="ll" style="top:256px;left:-1px"><svg class="bk" width="12" height="16" viewBox="0 0 12 16"><path d="M5.5 1.5 H11.2 V2.3 Q8.4 4 8.4 6.5 Q8.4 9 11.2 10.7 V11.5 H5.5Z"/></svg> 2025-10-22 16:13:36 <svg class="bk" width="12" height="16" viewBox="0 0 12 16"><path d="M8.5 1.5 H2.8 V2.3 Q5.6 4 5.6 6.5 Q5.6 9 2.8 10.7 V11.5 H8.5Z"/></svg><span class="c">OnEventTCPNetworkShut gameId:112670</span></div>
<div class="a sb" style="left:514px;top:0px;width:17px;height:300px;border-left:1px solid #a8a8a8;border-right:1px solid #a8a8a8"></div><div class="a sbb" style="left:514px;top:0px;width:17px;height:16px"><svg class="a" style="left:4px;top:5px" width="9" height="6" viewBox="0 0 9 6"><path d="M0.5 5.5 L4.5 1 L8.5 5.5" stroke="#606060" stroke-width="1.3" fill="none"/></svg></div><div class="a sbt" style="left:514px;top:250px;width:17px;height:17px"></div></div></div>
<div class="a" style="left:510px;top:420px;width:289px;height:497px;background:#55a8c4;border:1px solid #1f4f60"><svg width="0" height="0" style="position:absolute"><defs><linearGradient id="scr" x1="0" y1="1" x2="1" y2="0"><stop offset="0" stop-color="#0a9af5"/><stop offset="1" stop-color="#b8f0ff"/></linearGradient></defs></svg><div class="a pi" style="left:16px;top:20px"><svg width="17" height="17" viewBox="0 0 17 17" style="position:absolute;left:0;top:0"><ellipse cx="4.2" cy="4.2" rx="4" ry="3.3" transform="rotate(-35 4.2 4.2)" fill="#f4f4f4" stroke="#8a8a8a" stroke-width="0.6"/><path d="M2.5 3.2 L4.5 4" stroke="#555" stroke-width="1"/><ellipse cx="4.5" cy="11" rx="1.8" ry="2" fill="#eee" stroke="#999" stroke-width="0.5"/><path d="M5 7 L8 9" stroke="#a8a0d8" stroke-width="1.5"/><ellipse cx="11.5" cy="13.6" rx="4.4" ry="2.3" fill="#ece8f6" stroke="#8a80b8" stroke-width="0.7"/><path d="M7.5 4.5 L15 2.5 L15.8 10.2 L8.3 12 Z" fill="url(#scr)" stroke="#7a70c8" stroke-width="0.8"/></svg><span style="position:absolute;left:22px;top:0;white-space:nowrap">[ 灵溪麻将 ] -- [ 灵溪麻将 ] -- [ 运行 ]</span></div><div class="a pi" style="left:16px;top:43px"><svg width="17" height="17" viewBox="0 0 17 17" style="position:absolute;left:0;top:0"><ellipse cx="4.2" cy="4.2" rx="4" ry="3.3" transform="rotate(-35 4.2 4.2)" fill="#f4f4f4" stroke="#8a8a8a" stroke-width="0.6"/><path d="M2.5 3.2 L4.5 4" stroke="#555" stroke-width="1"/><ellipse cx="4.5" cy="11" rx="1.8" ry="2" fill="#eee" stroke="#999" stroke-width="0.5"/><path d="M5 7 L8 9" stroke="#a8a0d8" stroke-width="1.5"/><ellipse cx="11.5" cy="13.6" rx="4.4" ry="2.3" fill="#ece8f6" stroke="#8a80b8" stroke-width="0.7"/><path d="M7.5 4.5 L15 2.5 L15.8 10.2 L8.3 12 Z" fill="url(#scr)" stroke="#7a70c8" stroke-width="0.8"/></svg><span style="position:absolute;left:22px;top:0;white-space:nowrap">[ 拼十super ] -- [ 牛牛3 ] -- [ 运行 ]</span></div><div class="a pi" style="left:16px;top:66px"><svg width="17" height="17" viewBox="0 0 17 17" style="position:absolute;left:0;top:0"><ellipse cx="4.2" cy="4.2" rx="4" ry="3.3" transform="rotate(-35 4.2 4.2)" fill="#f4f4f4" stroke="#8a8a8a" stroke-width="0.6"/><path d="M2.5 3.2 L4.5 4" stroke="#555" stroke-width="1"/><ellipse cx="4.5" cy="11" rx="1.8" ry="2" fill="#eee" stroke="#999" stroke-width="0.5"/><path d="M5 7 L8 9" stroke="#a8a0d8" stroke-width="1.5"/><ellipse cx="11.5" cy="13.6" rx="4.4" ry="2.3" fill="#ece8f6" stroke="#8a80b8" stroke-width="0.7"/><path d="M7.5 4.5 L15 2.5 L15.8 10.2 L8.3 12 Z" fill="url(#scr)" stroke="#7a70c8" stroke-width="0.8"/></svg><span style="position:absolute;left:22px;top:0;white-space:nowrap">[ 李逵劈鱼 ] -- [ 捕鱼1 ] -- [ 运行 ]</span></div><div class="a pi" style="left:16px;top:89px"><svg width="17" height="17" viewBox="0 0 17 17" style="position:absolute;left:0;top:0"><ellipse cx="4.2" cy="4.2" rx="4" ry="3.3" transform="rotate(-35 4.2 4.2)" fill="#f4f4f4" stroke="#8a8a8a" stroke-width="0.6"/><path d="M2.5 3.2 L4.5 4" stroke="#555" stroke-width="1"/><ellipse cx="4.5" cy="11" rx="1.8" ry="2" fill="#eee" stroke="#999" stroke-width="0.5"/><path d="M5 7 L8 9" stroke="#a8a0d8" stroke-width="1.5"/><ellipse cx="11.5" cy="13.6" rx="4.4" ry="2.3" fill="#ece8f6" stroke="#8a80b8" stroke-width="0.7"/><path d="M7.5 4.5 L15 2.5 L15.8 10.2 L8.3 12 Z" fill="url(#scr)" stroke="#7a70c8" stroke-width="0.8"/></svg><span style="position:absolute;left:22px;top:0;white-space:nowrap">[ 拼十super ] -- [ 牛牛 ] -- [ 运行 ]</span></div><div class="a pi" style="left:16px;top:112px"><svg width="17" height="17" viewBox="0 0 17 17" style="position:absolute;left:0;top:0"><ellipse cx="4.2" cy="4.2" rx="4" ry="3.3" transform="rotate(-35 4.2 4.2)" fill="#f4f4f4" stroke="#8a8a8a" stroke-width="0.6"/><path d="M2.5 3.2 L4.5 4" stroke="#555" stroke-width="1"/><ellipse cx="4.5" cy="11" rx="1.8" ry="2" fill="#eee" stroke="#999" stroke-width="0.5"/><path d="M5 7 L8 9" stroke="#a8a0d8" stroke-width="1.5"/><ellipse cx="11.5" cy="13.6" rx="4.4" ry="2.3" fill="#ece8f6" stroke="#8a80b8" stroke-width="0.7"/><path d="M7.5 4.5 L15 2.5 L15.8 10.2 L8.3 12 Z" fill="url(#scr)" stroke="#7a70c8" stroke-width="0.8"/></svg><span style="position:absolute;left:22px;top:0;white-space:nowrap">[ 红中麻将 ] -- [ 红中麻将 ] -- [ 运行 ]</span></div><div class="a pi" style="left:16px;top:135px"><svg width="17" height="17" viewBox="0 0 17 17" style="position:absolute;left:0;top:0"><ellipse cx="4.2" cy="4.2" rx="4" ry="3.3" transform="rotate(-35 4.2 4.2)" fill="#f4f4f4" stroke="#8a8a8a" stroke-width="0.6"/><path d="M2.5 3.2 L4.5 4" stroke="#555" stroke-width="1"/><ellipse cx="4.5" cy="11" rx="1.8" ry="2" fill="#eee" stroke="#999" stroke-width="0.5"/><path d="M5 7 L8 9" stroke="#a8a0d8" stroke-width="1.5"/><ellipse cx="11.5" cy="13.6" rx="4.4" ry="2.3" fill="#ece8f6" stroke="#8a80b8" stroke-width="0.7"/><path d="M7.5 4.5 L15 2.5 L15.8 10.2 L8.3 12 Z" fill="url(#scr)" stroke="#7a70c8" stroke-width="0.8"/></svg><span style="position:absolute;left:22px;top:0;white-space:nowrap">[ 牌九6人 ] -- [ 牌九2 ] -- [ 运行 ]</span></div><div class="a pi" style="left:16px;top:158px"><svg width="17" height="17" viewBox="0 0 17 17" style="position:absolute;left:0;top:0"><ellipse cx="4.2" cy="4.2" rx="4" ry="3.3" transform="rotate(-35 4.2 4.2)" fill="#f4f4f4" stroke="#8a8a8a" stroke-width="0.6"/><path d="M2.5 3.2 L4.5 4" stroke="#555" stroke-width="1"/><ellipse cx="4.5" cy="11" rx="1.8" ry="2" fill="#eee" stroke="#999" stroke-width="0.5"/><path d="M5 7 L8 9" stroke="#a8a0d8" stroke-width="1.5"/><ellipse cx="11.5" cy="13.6" rx="4.4" ry="2.3" fill="#ece8f6" stroke="#8a80b8" stroke-width="0.7"/><path d="M7.5 4.5 L15 2.5 L15.8 10.2 L8.3 12 Z" fill="url(#scr)" stroke="#7a70c8" stroke-width="0.8"/></svg><span style="position:absolute;left:22px;top:0;white-space:nowrap">游戏服务器 -- [ 停止 ]</span></div><div class="a pi" style="left:16px;top:181px"><svg width="17" height="17" viewBox="0 0 17 17" style="position:absolute;left:0;top:0"><ellipse cx="4.2" cy="4.2" rx="4" ry="3.3" transform="rotate(-35 4.2 4.2)" fill="#f4f4f4" stroke="#8a8a8a" stroke-width="0.6"/><path d="M2.5 3.2 L4.5 4" stroke="#555" stroke-width="1"/><ellipse cx="4.5" cy="11" rx="1.8" ry="2" fill="#eee" stroke="#999" stroke-width="0.5"/><path d="M5 7 L8 9" stroke="#a8a0d8" stroke-width="1.5"/><ellipse cx="11.5" cy="13.6" rx="4.4" ry="2.3" fill="#ece8f6" stroke="#8a80b8" stroke-width="0.7"/><path d="M7.5 4.5 L15 2.5 L15.8 10.2 L8.3 12 Z" fill="url(#scr)" stroke="#7a70c8" stroke-width="0.8"/></svg><span style="position:absolute;left:22px;top:0;white-space:nowrap">[ 智勇三张 ] -- [ 炸金花1 ] -- [ 运行 ]</span></div><div class="a pi" style="left:16px;top:204px"><svg width="17" height="17" viewBox="0 0 17 17" style="position:absolute;left:0;top:0"><ellipse cx="4.2" cy="4.2" rx="4" ry="3.3" transform="rotate(-35 4.2 4.2)" fill="#f4f4f4" stroke="#8a8a8a" stroke-width="0.6"/><path d="M2.5 3.2 L4.5 4" stroke="#555" stroke-width="1"/><ellipse cx="4.5" cy="11" rx="1.8" ry="2" fill="#eee" stroke="#999" stroke-width="0.5"/><path d="M5 7 L8 9" stroke="#a8a0d8" stroke-width="1.5"/><ellipse cx="11.5" cy="13.6" rx="4.4" ry="2.3" fill="#ece8f6" stroke="#8a80b8" stroke-width="0.7"/><path d="M7.5 4.5 L15 2.5 L15.8 10.2 L8.3 12 Z" fill="url(#scr)" stroke="#7a70c8" stroke-width="0.8"/></svg><span style="position:absolute;left:22px;top:0;white-space:nowrap">[ 十三水 ] -- [ 十三水 ] -- [ 运行 ]</span></div><div class="a pi" style="left:16px;top:227px"><svg width="17" height="17" viewBox="0 0 17 17" style="position:absolute;left:0;top:0"><ellipse cx="4.2" cy="4.2" rx="4" ry="3.3" transform="rotate(-35 4.2 4.2)" fill="#f4f4f4" stroke="#8a8a8a" stroke-width="0.6"/><path d="M2.5 3.2 L4.5 4" stroke="#555" stroke-width="1"/><ellipse cx="4.5" cy="11" rx="1.8" ry="2" fill="#eee" stroke="#999" stroke-width="0.5"/><path d="M5 7 L8 9" stroke="#a8a0d8" stroke-width="1.5"/><ellipse cx="11.5" cy="13.6" rx="4.4" ry="2.3" fill="#ece8f6" stroke="#8a80b8" stroke-width="0.7"/><path d="M7.5 4.5 L15 2.5 L15.8 10.2 L8.3 12 Z" fill="url(#scr)" stroke="#7a70c8" stroke-width="0.8"/></svg><span style="position:absolute;left:22px;top:0;white-space:nowrap">[ 智勇三张 ] -- [ 炸金花2 ] -- [ 运行 ]</span></div><div class="a pi" style="left:16px;top:250px"><svg width="17" height="17" viewBox="0 0 17 17" style="position:absolute;left:0;top:0"><ellipse cx="4.2" cy="4.2" rx="4" ry="3.3" transform="rotate(-35 4.2 4.2)" fill="#f4f4f4" stroke="#8a8a8a" stroke-width="0.6"/><path d="M2.5 3.2 L4.5 4" stroke="#555" stroke-width="1"/><ellipse cx="4.5" cy="11" rx="1.8" ry="2" fill="#eee" stroke="#999" stroke-width="0.5"/><path d="M5 7 L8 9" stroke="#a8a0d8" stroke-width="1.5"/><ellipse cx="11.5" cy="13.6" rx="4.4" ry="2.3" fill="#ece8f6" stroke="#8a80b8" stroke-width="0.7"/><path d="M7.5 4.5 L15 2.5 L15.8 10.2 L8.3 12 Z" fill="url(#scr)" stroke="#7a70c8" stroke-width="0.8"/></svg><span style="position:absolute;left:22px;top:0;white-space:nowrap">[ 李逵劈鱼 ] -- [ 捕鱼2 ] -- [ 运行 ]</span></div><div class="a pi" style="left:16px;top:273px"><svg width="17" height="17" viewBox="0 0 17 17" style="position:absolute;left:0;top:0"><ellipse cx="4.2" cy="4.2" rx="4" ry="3.3" transform="rotate(-35 4.2 4.2)" fill="#f4f4f4" stroke="#8a8a8a" stroke-width="0.6"/><path d="M2.5 3.2 L4.5 4" stroke="#555" stroke-width="1"/><ellipse cx="4.5" cy="11" rx="1.8" ry="2" fill="#eee" stroke="#999" stroke-width="0.5"/><path d="M5 7 L8 9" stroke="#a8a0d8" stroke-width="1.5"/><ellipse cx="11.5" cy="13.6" rx="4.4" ry="2.3" fill="#ece8f6" stroke="#8a80b8" stroke-width="0.7"/><path d="M7.5 4.5 L15 2.5 L15.8 10.2 L8.3 12 Z" fill="url(#scr)" stroke="#7a70c8" stroke-width="0.8"/></svg><span style="position:absolute;left:22px;top:0;white-space:nowrap">[ 牌九6人 ] -- [ 牌九3 ] -- [ 运行 ]</span></div><div class="a pi" style="left:16px;top:296px"><svg width="17" height="17" viewBox="0 0 17 17" style="position:absolute;left:0;top:0"><ellipse cx="4.2" cy="4.2" rx="4" ry="3.3" transform="rotate(-35 4.2 4.2)" fill="#f4f4f4" stroke="#8a8a8a" stroke-width="0.6"/><path d="M2.5 3.2 L4.5 4" stroke="#555" stroke-width="1"/><ellipse cx="4.5" cy="11" rx="1.8" ry="2" fill="#eee" stroke="#999" stroke-width="0.5"/><path d="M5 7 L8 9" stroke="#a8a0d8" stroke-width="1.5"/><ellipse cx="11.5" cy="13.6" rx="4.4" ry="2.3" fill="#ece8f6" stroke="#8a80b8" stroke-width="0.7"/><path d="M7.5 4.5 L15 2.5 L15.8 10.2 L8.3 12 Z" fill="url(#scr)" stroke="#7a70c8" stroke-width="0.8"/></svg><span style="position:absolute;left:22px;top:0;white-space:nowrap">[ 牌九6人 ] -- [ 牌九6人 ] -- [ 运行 ]</span></div><div class="a pi" style="left:16px;top:319px"><svg width="17" height="17" viewBox="0 0 17 17" style="position:absolute;left:0;top:0"><ellipse cx="4.2" cy="4.2" rx="4" ry="3.3" transform="rotate(-35 4.2 4.2)" fill="#f4f4f4" stroke="#8a8a8a" stroke-width="0.6"/><path d="M2.5 3.2 L4.5 4" stroke="#555" stroke-width="1"/><ellipse cx="4.5" cy="11" rx="1.8" ry="2" fill="#eee" stroke="#999" stroke-width="0.5"/><path d="M5 7 L8 9" stroke="#a8a0d8" stroke-width="1.5"/><ellipse cx="11.5" cy="13.6" rx="4.4" ry="2.3" fill="#ece8f6" stroke="#8a80b8" stroke-width="0.7"/><path d="M7.5 4.5 L15 2.5 L15.8 10.2 L8.3 12 Z" fill="url(#scr)" stroke="#7a70c8" stroke-width="0.8"/></svg><span style="position:absolute;left:22px;top:0;white-space:nowrap">[ 智勇三张 ] -- [ 炸金花3 ] -- [ 运行 ]</span></div><div class="a pi" style="left:16px;top:342px"><svg width="17" height="17" viewBox="0 0 17 17" style="position:absolute;left:0;top:0"><ellipse cx="4.2" cy="4.2" rx="4" ry="3.3" transform="rotate(-35 4.2 4.2)" fill="#f4f4f4" stroke="#8a8a8a" stroke-width="0.6"/><path d="M2.5 3.2 L4.5 4" stroke="#555" stroke-width="1"/><ellipse cx="4.5" cy="11" rx="1.8" ry="2" fill="#eee" stroke="#999" stroke-width="0.5"/><path d="M5 7 L8 9" stroke="#a8a0d8" stroke-width="1.5"/><ellipse cx="11.5" cy="13.6" rx="4.4" ry="2.3" fill="#ece8f6" stroke="#8a80b8" stroke-width="0.7"/><path d="M7.5 4.5 L15 2.5 L15.8 10.2 L8.3 12 Z" fill="url(#scr)" stroke="#7a70c8" stroke-width="0.8"/></svg><span style="position:absolute;left:22px;top:0;white-space:nowrap">[ 李逵劈鱼 ] -- [ 捕鱼3 ] -- [ 运行 ]</span></div><div class="a pi" style="left:16px;top:365px"><svg width="17" height="17" viewBox="0 0 17 17" style="position:absolute;left:0;top:0"><ellipse cx="4.2" cy="4.2" rx="4" ry="3.3" transform="rotate(-35 4.2 4.2)" fill="#f4f4f4" stroke="#8a8a8a" stroke-width="0.6"/><path d="M2.5 3.2 L4.5 4" stroke="#555" stroke-width="1"/><ellipse cx="4.5" cy="11" rx="1.8" ry="2" fill="#eee" stroke="#999" stroke-width="0.5"/><path d="M5 7 L8 9" stroke="#a8a0d8" stroke-width="1.5"/><ellipse cx="11.5" cy="13.6" rx="4.4" ry="2.3" fill="#ece8f6" stroke="#8a80b8" stroke-width="0.7"/><path d="M7.5 4.5 L15 2.5 L15.8 10.2 L8.3 12 Z" fill="url(#scr)" stroke="#7a70c8" stroke-width="0.8"/></svg><span style="position:absolute;left:22px;top:0;white-space:nowrap">[ 十三水 ] -- [ 十三水 ] -- [ 运行 ]</span></div><div class="a pi" style="left:16px;top:388px"><svg width="17" height="17" viewBox="0 0 17 17" style="position:absolute;left:0;top:0"><ellipse cx="4.2" cy="4.2" rx="4" ry="3.3" transform="rotate(-35 4.2 4.2)" fill="#f4f4f4" stroke="#8a8a8a" stroke-width="0.6"/><path d="M2.5 3.2 L4.5 4" stroke="#555" stroke-width="1"/><ellipse cx="4.5" cy="11" rx="1.8" ry="2" fill="#eee" stroke="#999" stroke-width="0.5"/><path d="M5 7 L8 9" stroke="#a8a0d8" stroke-width="1.5"/><ellipse cx="11.5" cy="13.6" rx="4.4" ry="2.3" fill="#ece8f6" stroke="#8a80b8" stroke-width="0.7"/><path d="M7.5 4.5 L15 2.5 L15.8 10.2 L8.3 12 Z" fill="url(#scr)" stroke="#7a70c8" stroke-width="0.8"/></svg><span style="position:absolute;left:22px;top:0;white-space:nowrap">[ 拼十super ] -- [ 牛牛2 ] -- [ 运行 ]</span></div><div class="a pi" style="left:16px;top:411px"><svg width="17" height="17" viewBox="0 0 17 17" style="position:absolute;left:0;top:0"><ellipse cx="4.2" cy="4.2" rx="4" ry="3.3" transform="rotate(-35 4.2 4.2)" fill="#f4f4f4" stroke="#8a8a8a" stroke-width="0.6"/><path d="M2.5 3.2 L4.5 4" stroke="#555" stroke-width="1"/><ellipse cx="4.5" cy="11" rx="1.8" ry="2" fill="#eee" stroke="#999" stroke-width="0.5"/><path d="M5 7 L8 9" stroke="#a8a0d8" stroke-width="1.5"/><ellipse cx="11.5" cy="13.6" rx="4.4" ry="2.3" fill="#ece8f6" stroke="#8a80b8" stroke-width="0.7"/><path d="M7.5 4.5 L15 2.5 L15.8 10.2 L8.3 12 Z" fill="url(#scr)" stroke="#7a70c8" stroke-width="0.8"/></svg><span style="position:absolute;left:22px;top:0;white-space:nowrap">[ 牌九6人 ] -- [ 牌九1 ] -- [ 运行 ]</span></div><div class="a pi" style="left:16px;top:434px"><svg width="17" height="17" viewBox="0 0 17 17" style="position:absolute;left:0;top:0"><ellipse cx="4.2" cy="4.2" rx="4" ry="3.3" transform="rotate(-35 4.2 4.2)" fill="#f4f4f4" stroke="#8a8a8a" stroke-width="0.6"/><path d="M2.5 3.2 L4.5 4" stroke="#555" stroke-width="1"/><ellipse cx="4.5" cy="11" rx="1.8" ry="2" fill="#eee" stroke="#999" stroke-width="0.5"/><path d="M5 7 L8 9" stroke="#a8a0d8" stroke-width="1.5"/><ellipse cx="11.5" cy="13.6" rx="4.4" ry="2.3" fill="#ece8f6" stroke="#8a80b8" stroke-width="0.7"/><path d="M7.5 4.5 L15 2.5 L15.8 10.2 L8.3 12 Z" fill="url(#scr)" stroke="#7a70c8" stroke-width="0.8"/></svg><span style="position:absolute;left:22px;top:0;white-space:nowrap">游戏服务器 -- [ 停止 ]</span></div><div class="a pi" style="left:16px;top:457px"><svg width="17" height="17" viewBox="0 0 17 17" style="position:absolute;left:0;top:0"><ellipse cx="4.2" cy="4.2" rx="4" ry="3.3" transform="rotate(-35 4.2 4.2)" fill="#f4f4f4" stroke="#8a8a8a" stroke-width="0.6"/><path d="M2.5 3.2 L4.5 4" stroke="#555" stroke-width="1"/><ellipse cx="4.5" cy="11" rx="1.8" ry="2" fill="#eee" stroke="#999" stroke-width="0.5"/><path d="M5 7 L8 9" stroke="#a8a0d8" stroke-width="1.5"/><ellipse cx="11.5" cy="13.6" rx="4.4" ry="2.3" fill="#ece8f6" stroke="#8a80b8" stroke-width="0.7"/><path d="M7.5 4.5 L15 2.5 L15.8 10.2 L8.3 12 Z" fill="url(#scr)" stroke="#7a70c8" stroke-width="0.8"/></svg><span style="position:absolute;left:22px;top:0;white-space:nowrap">[ 拼十super ] -- [ 牛牛1 ] -- [ 运行 ]</span></div></div>
<!-- WINDOWS END -->
<!-- TASKBAR START -->
<div class="a" style="left:1707px;top:7px;width:101px;height:22px;background:#c4d7de"></div><div class="a" style="left:1707px;top:7px;width:29px;height:22px;border:1px solid #5a5f66;border-top:1px solid #5a5f66"></div><div class="a" style="left:1735px;top:7px;width:27px;height:22px;border:1px solid #5a5f66;border-top:1px solid #5a5f66"></div><div class="a" style="left:1761px;top:7px;width:47px;height:22px;border:1px solid #5a5f66;border-top:1px solid #5a5f66"></div><div class="a" style="left:1744px;top:13px;width:12px;height:10px;border:3px solid #000"></div><svg class="a" style="left:1779px;top:14px" width="11" height="9" viewBox="0 0 11 9"><path d="M1 0.5 L10 8.5 M10 0.5 L1 8.5" stroke="#000" stroke-width="2.6"/></svg><div class="a" style="left:1713px;top:12px;width:6px;height:4px;background:#000"></div><div class="a" style="left:1674px;top:34px;width:22px;height:12px;border-radius:0 0 11px 11px;background:#e3e5e6"></div><div class="a" style="left:1595px;top:3px;width:130px;height:38px;border:1px solid #1592f5;border-radius:6px;background:#eef7ff;overflow:hidden">
<div class="a" style="left:0;top:0;width:37px;height:36px;border-radius:5px 5px 5px 5px;background:linear-gradient(45deg,#38b6ff,#0b8af3 60%)"></div>
<svg class="a" style="left:8px;top:9px" width="22" height="18" viewBox="0 0 22 18"><g fill="none" stroke="#fff" stroke-width="2.6"><circle cx="11" cy="5.5" r="3.8"/><circle cx="5.5" cy="12" r="3.8"/><path d="M12.5 12 A3.8 3.8 0 1 0 16.3 8.2"/></g></svg>
<div class="a" style="left:43px;top:9px;font-size:13px;font-weight:bold;line-height:18px;color:#1592f5;white-space:nowrap">拖拽至此上传</div>
</div>
<div class="a" style="left:-11px;top:903px;width:95px;height:22px;background:#f1f2f7;border:1px solid #a0a0a0;font-size:12px;line-height:20px;color:#444;padding-left:2px;white-space:nowrap">文件资源管理器</div><div class="a" style="left:0;top:925px;width:1814px;height:38px;background:#66c8ea;border-top:1px solid #4a5560"></div><div class="a" style="left:626px;top:926px;width:51px;height:37px;background:#8fd7f0"></div><div class="a" style="left:5px;top:926px;width:1px;height:37px;background:#2f7f9c"></div><div class="a" style="left:64px;top:926px;width:1px;height:37px;background:#2f7f9c"></div><div class="a" style="left:129px;top:926px;width:1px;height:37px;background:#2f7f9c"></div><div class="a" style="left:188px;top:926px;width:1px;height:37px;background:#2f7f9c"></div><div class="a" style="left:191px;top:926px;width:1px;height:37px;background:#2f7f9c"></div><div class="a" style="left:250px;top:926px;width:1px;height:37px;background:#2f7f9c"></div><div class="a" style="left:253px;top:926px;width:1px;height:37px;background:#2f7f9c"></div><div class="a" style="left:312px;top:926px;width:1px;height:37px;background:#2f7f9c"></div><div class="a" style="left:315px;top:926px;width:1px;height:37px;background:#2f7f9c"></div><div class="a" style="left:374px;top:926px;width:1px;height:37px;background:#2f7f9c"></div><div class="a" style="left:377px;top:926px;width:1px;height:37px;background:#2f7f9c"></div><div class="a" style="left:436px;top:926px;width:1px;height:37px;background:#2f7f9c"></div><div class="a" style="left:439px;top:926px;width:1px;height:37px;background:#2f7f9c"></div><div class="a" style="left:498px;top:926px;width:1px;height:37px;background:#2f7f9c"></div><div class="a" style="left:501px;top:926px;width:1px;height:37px;background:#2f7f9c"></div><div class="a" style="left:560px;top:926px;width:1px;height:37px;background:#2f7f9c"></div><div class="a" style="left:563px;top:926px;width:1px;height:37px;background:#2f7f9c"></div><div class="a" style="left:622px;top:926px;width:1px;height:37px;background:#2f7f9c"></div><div class="a" style="left:625px;top:926px;width:1px;height:37px;background:#2f7f9c"></div><div class="a" style="left:676px;top:926px;width:1px;height:37px;background:#2f7f9c"></div><div class="a" style="left:680px;top:926px;width:1px;height:37px;background:#2f7f9c"></div><div class="a" style="left:684px;top:926px;width:1px;height:37px;background:#2f7f9c"></div><div class="a" style="left:746px;top:926px;width:1px;height:37px;background:#2f7f9c"></div><div class="a" style="left:1811px;top:926px;width:1px;height:37px;background:#4a5560"></div><svg class="a" style="left:19px;top:931px" width="33" height="29" viewBox="0 0 33 29">
<path d="M1 5 L1 3 Q1 1 3 1 L11 1 L13 3 L30 3 Q32 3 32 5 L32 27 L1 27Z" fill="#e9c66a" stroke="#b8954a" stroke-width="0.8"/>
<rect x="5" y="1.5" width="10" height="3" fill="#fff"/><rect x="6" y="2" width="3" height="2" fill="#2bb24c"/>
<rect x="12" y="3.5" width="12" height="3" fill="#fff"/><rect x="13" y="4" width="3" height="2" fill="#e03030"/>
<rect x="19" y="5.5" width="12" height="3" fill="#fff"/><rect x="20" y="6" width="3" height="2" fill="#2d8ae0"/>
<path d="M1 9 L32 9 L32 27 L1 27Z" fill="#f6dc8e" stroke="#c9a650" stroke-width="0.8"/>
<path d="M5 16 L27 16 Q29 16 29 18 L29 27 L24 27 L24 21 L10 21 L10 27 L5 27Z" fill="#9ed0f0" stroke="#5aa0d0" stroke-width="0.8"/>
</svg><div class="a" style="left:81px;top:929px;width:32px;height:32px;border-radius:7px;background:#fff"></div>
<svg class="a" style="left:84px;top:933px" width="26" height="27" viewBox="0 0 26 27"><g fill="none" stroke-width="3"><path d="M8.4 8.5 A4.6 4.6 0 1 1 17.6 8.5" stroke="#3aa7f5"/><path d="M17.6 8.5 A4.6 4.6 0 0 1 8.4 8.5" stroke="#f2557a"/><circle cx="6.5" cy="16" r="4.4" stroke="#3aa7f5"/><path d="M19.5 11.6 A4.4 4.4 0 1 1 15.5 18" stroke="#3aa7f5"/></g><rect x="8" y="24.5" width="5" height="2" fill="#f2557a"/><rect x="13" y="24.5" width="5" height="2" fill="#3a7af5"/></svg><svg class="a" style="left:144px;top:930px" width="30" height="30" viewBox="0 0 30 30">
<path d="M15 15 L2 7.5 A15 15 0 0 1 28 7.5Z" fill="#db4437"/><path d="M15 15 L28 7.5 A15 15 0 0 1 15 30Z" fill="#f4c20d"/><path d="M15 15 L15 30 A15 15 0 0 1 2 7.5Z" fill="#0f9d58"/>
<circle cx="15" cy="15" r="6.8" fill="#fff"/><circle cx="15" cy="15" r="5.4" fill="#4285f4"/></svg><svg class="a" style="left:205px;top:930px" width="32" height="29" viewBox="0 0 32 29">
<path d="M3 4 Q9 0 15 4 L15 19 Q9 22 3 19Z" fill="#f5d640"/><ellipse cx="9" cy="4" rx="6" ry="3" fill="#f1b24a"/>
<path d="M22 1 L28 1 L28 7 L26 7 L26 3 L22 3Z" fill="#47a43c"/><path d="M1 20 L3 20 L3 26 L7 26 L7 28 L1 28Z" fill="#47a43c"/>
<path d="M13 27 L25 13 M14 14 L26 26" stroke="#1a6bd0" stroke-width="2.4"/><circle cx="26" cy="12" r="3" fill="none" stroke="#1a6bd0" stroke-width="2"/></svg><svg class="a" style="left:266px;top:933px" width="33" height="26" viewBox="0 0 33 26">
<path d="M9 2 L1 11 L6 11 Q6 22 16 22 Q11 18 12 11 L17 11Z" fill="#3fbf2a" stroke="#1f7a14" stroke-width="1"/>
<path d="M24 24 L32 15 L27 15 Q27 4 17 4 Q22 8 21 15 L16 15Z" fill="#3fbf2a" stroke="#1f7a14" stroke-width="1"/>
<ellipse cx="16.5" cy="13" rx="5" ry="8" fill="none" stroke="#2e9a20" stroke-width="2.5"/></svg><svg class="a" style="left:329px;top:931px" width="32" height="29" viewBox="0 0 32 29">
<path d="M0 9 L5 8 L8 21 L14 2 L16 4 L10 27 L6 27Z" fill="#f59a18" stroke="#b3261a" stroke-width="0.8"/>
<path d="M16 8 Q20 3 30 6 L22 8 Q18 9 20 12 L24 15 Q28 20 22 24 Q16 28 8 28 Q16 24 19 21 Q21 18 17 15 Q13 11 16 8Z" fill="#f7b01c" stroke="#b3261a" stroke-width="0.8"/></svg><svg class="a" style="left:392px;top:932px" width="30" height="28" viewBox="0 0 30 28">
<path d="M12 17 L24 6" stroke="#a8a8a8" stroke-width="4"/><path d="M19 6 L23 1 L26 3 L24 6 L28 8 L25 12Z" fill="#c0c0c0" stroke="#888" stroke-width="0.8"/>
<ellipse cx="9" cy="20" rx="6.5" ry="6.5" fill="none" stroke="#e8a31c" stroke-width="3.2"/></svg><svg class="a" style="left:452px;top:929px" width="33" height="32" viewBox="0 0 33 32"><defs><linearGradient id="tsg" x1="0" y1="1" x2="1" y2="0"><stop offset="0" stop-color="#4848ff"/><stop offset="1" stop-color="#b0a8ff"/></linearGradient></defs>
<path d="M16.5 0 L20.5 11.5 L33 11.8 L23 19.5 L27 32 L16.5 24.5 L6 32 L10 19.5 L0 11.8 L12.5 11.5Z" fill="url(#tsg)"/></svg><svg class="a" style="left:516px;top:929px" width="30" height="30" viewBox="0 0 30 30">
<circle cx="15" cy="14" r="14" fill="#9ad8ee" opacity="0.6"/>
<path d="M13 4 Q24 4 24 12 Q24 20 13 20 L8 24 L9 19 Q2 17 2 12 Q2 4 13 4Z" fill="#1c9a9e"/>
<path d="M18 13 Q28 13 28 19 Q28 25 20 25 L23 28 L17 25 Q10 24 10 19 Q10 13 18 13Z" fill="#f6e6b0" stroke="#c8b070" stroke-width="0.6"/></svg><svg class="a" style="left:577px;top:929px" width="32" height="32" viewBox="0 0 32 32">
<g fill="#b8b8b8" stroke="#6a6a6a" stroke-width="0.8"><path d="M13 0 H19 L20 5 L24 7 L28 4 L32 9 L28 12 L29 16 L28 20 L32 23 L28 28 L24 25 L20 27 L19 32 H13 L12 27 L8 25 L4 28 L0 23 L4 20 L3 16 L4 12 L0 9 L4 4 L8 7 L12 5Z"/></g>
<circle cx="16" cy="16" r="8" fill="#d8d8d8"/><circle cx="16" cy="16" r="6" fill="#b8380e"/><circle cx="16" cy="16" r="2.5" fill="#9ad8ee"/></svg><svg class="a" style="left:635px;top:929px" width="31" height="32" viewBox="0 0 31 32">
<ellipse cx="8" cy="8" rx="7" ry="6" fill="#dcdcdc" stroke="#8a8a8a" stroke-width="0.8"/><rect x="6" y="12" width="6" height="10" fill="#c8c8c8"/><ellipse cx="8" cy="22" rx="5" ry="3" fill="#d0d0d0" stroke="#999" stroke-width="0.6"/>
<path d="M13 6 L29 3 L29 22 L13 24Z" fill="#3aaaf2" stroke="#6a6ac0" stroke-width="1.2"/>
<ellipse cx="21" cy="28" rx="8" ry="3.5" fill="#dcdcf0" stroke="#9090c0" stroke-width="0.8"/><rect x="19" y="23" width="4" height="5" fill="#b0b0d8"/></svg><div class="a" style="left:701px;top:929px;width:32px;height:32px;border-radius:5px;background:#1c86e0"></div>
<div class="a" style="left:701px;top:929px;width:32px;height:32px;font-size:27px;line-height:32px;color:#fff;text-align:center;font-family:'Liberation Sans',sans-serif">P</div><svg class="a" style="left:1578px;top:942px" width="9" height="6" viewBox="0 0 9 6"><path d="M0 6 L4.5 0 L9 6Z" fill="#111"/></svg>
<svg class="a" style="left:1599px;top:937px" width="18" height="16" viewBox="0 0 18 16"><path d="M1 5 H4 L9 1 V14 L4 10 H1Z" fill="#eee" stroke="#555" stroke-width="0.8"/><circle cx="12.5" cy="11" r="4.5" fill="#e02a2a"/><path d="M10.5 9 L14.5 13 M14.5 9 L10.5 13" stroke="#fff" stroke-width="1.4"/></svg>
<svg class="a" style="left:1623px;top:937px" width="17" height="16" viewBox="0 0 17 16"><rect x="1" y="1" width="4" height="5" rx="2" fill="none" stroke="#222" stroke-width="1.2"/><path d="M3 6 V15" stroke="#222" stroke-width="1.2"/><rect x="6" y="3" width="10" height="8" fill="none" stroke="#222" stroke-width="1.2"/><path d="M11 11 V14 M8 14.5 H14" stroke="#222" stroke-width="1.2"/></svg>
<svg class="a" style="left:1647px;top:937px" width="17" height="17" viewBox="0 0 17 17"><path d="M2 1 V16" stroke="#eee" stroke-width="1.6"/><path d="M3 2 Q7 0 9 2 Q12 4 15 2 V9 Q12 11 9 9 Q7 7 3 9Z" fill="#f2f2f2" stroke="#666" stroke-width="0.6"/><circle cx="11.5" cy="11.5" r="4.5" fill="#e02a2a"/><path d="M9.5 9.5 L13.5 13.5 M13.5 9.5 L9.5 13.5" stroke="#fff" stroke-width="1.4"/></svg>
<div class="a" style="left:1674px;top:935px;font-size:15px;line-height:20px;color:#111">英</div>
<div class="a" style="left:1703px;top:937px;width:17px;height:17px;background:#fff;border:1px solid #111;font-size:14px;line-height:15px;text-align:center;color:#000">M</div>
<div class="a" style="left:1751px;top:929px;font-size:12px;line-height:15px;color:#111">16:22</div>
<div class="a" style="left:1733px;top:947px;font-size:12.6px;line-height:15px;color:#111">2025/10/22</div>
<!-- TASKBAR END -->
</body></html>
